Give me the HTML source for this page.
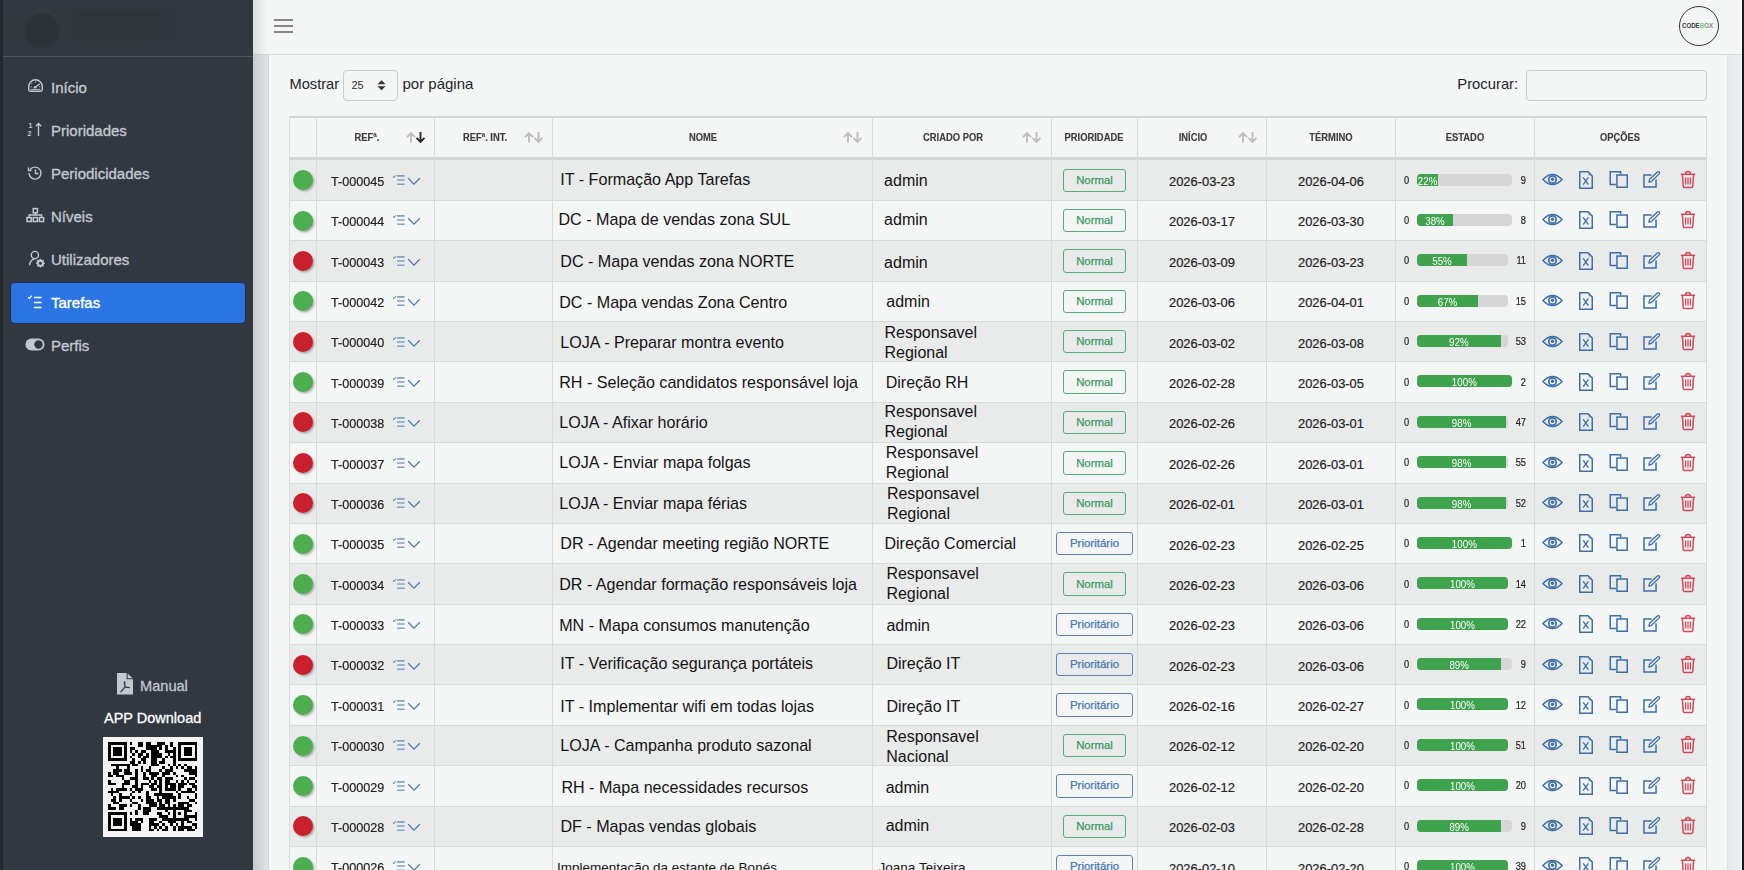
<!DOCTYPE html>
<html><head><meta charset="utf-8"><title>Tarefas</title>
<style>
html,body{margin:0;padding:0;width:1744px;height:870px;overflow:hidden;background:#f4f5f5}
body{position:relative;font-family:"Liberation Sans",sans-serif}
.b{position:absolute}
.t{position:absolute;white-space:nowrap;font-family:"Liberation Sans",sans-serif}
svg.b{overflow:visible}
</style></head><body>
<div class="b" style="left:0.00px;top:0.00px;width:1744.00px;height:870.00px;background:#f4f5f5"></div>
<div class="b" style="left:253.00px;top:54.00px;width:1491.00px;height:816.00px;background:#dee2e5"></div>
<div class="b" style="left:1727.00px;top:54.00px;width:15.00px;height:816.00px;background:linear-gradient(90deg,#dcdfe3 0px,#e9ecef 2px,#eceef1 100%)"></div>
<div class="b" style="left:268.00px;top:54.00px;width:1458.00px;height:816.00px;background:#f4f5f5;border-left:1px solid #d3d7da"></div>
<div class="b" style="left:1742.00px;top:0.00px;width:2.00px;height:870.00px;background:#1a1a1a"></div>
<div class="b" style="left:253.00px;top:0.00px;width:1489.00px;height:54.00px;background:#f4f5f5;border-bottom:1px solid #d6d8d9"></div>
<div class="b" style="left:253.00px;top:0.00px;width:14.00px;height:870.00px;background:linear-gradient(90deg,rgba(0,0,0,0.10),rgba(0,0,0,0))"></div>
<div class="b" style="left:0.00px;top:0.00px;width:253.00px;height:870.00px;background:#32383f"></div>
<div class="b" style="left:0.00px;top:0.00px;width:3.00px;height:870.00px;background:#24282c"></div>
<div class="b" style="left:3.00px;top:56.00px;width:250.00px;height:1.00px;background:#4b545c"></div>
<div class="b" style="left:24.00px;top:10.00px;width:36.00px;height:38.00px;background:#2d3237;border-radius:50%;filter:blur(1.5px);box-shadow:inset 0 2px 1px rgba(255,255,255,0.08)"></div>
<div class="b" style="left:70.00px;top:12.00px;width:105.00px;height:26.00px;background:#30363b;filter:blur(3px)"></div>
<div class="b" style="left:11.00px;top:283.00px;width:234.00px;height:40.00px;background:#2a74e4;border-radius:4px;box-shadow:0 0 0 1px rgba(10,40,90,.55)"></div>
<div class="t" style="left:51.00px;top:80.30px;font-size:15px;line-height:15px;font-weight:400;color:#c2c7d0;-webkit-text-stroke:0.35px #c2c7d0;">Início</div>
<div class="t" style="left:51.00px;top:123.30px;font-size:15px;line-height:15px;font-weight:400;color:#c2c7d0;-webkit-text-stroke:0.35px #c2c7d0;">Prioridades</div>
<div class="t" style="left:51.00px;top:166.30px;font-size:15px;line-height:15px;font-weight:400;color:#c2c7d0;-webkit-text-stroke:0.35px #c2c7d0;">Periodicidades</div>
<div class="t" style="left:51.00px;top:209.30px;font-size:15px;line-height:15px;font-weight:400;color:#c2c7d0;-webkit-text-stroke:0.35px #c2c7d0;">Níveis</div>
<div class="t" style="left:51.00px;top:252.30px;font-size:15px;line-height:15px;font-weight:400;color:#c2c7d0;-webkit-text-stroke:0.35px #c2c7d0;">Utilizadores</div>
<div class="t" style="left:51.00px;top:295.30px;font-size:15px;line-height:15px;font-weight:400;color:#ffffff;-webkit-text-stroke:0.35px #ffffff;">Tarefas</div>
<div class="t" style="left:51.00px;top:338.30px;font-size:15px;line-height:15px;font-weight:400;color:#c2c7d0;-webkit-text-stroke:0.35px #c2c7d0;">Perfis</div>
<svg class="b" style="left:27.50px;top:79.30px;" width="15" height="13" viewBox="0 0 15 13"><path d="M7.5 0.75A6.75 6.75 0 0 0 0.75 7.5V10.6Q0.75 12.25 2.4 12.25H12.6Q14.25 12.25 14.25 10.6V7.5A6.75 6.75 0 0 0 7.5 0.75Z" fill="none" stroke="#c2c7d0" stroke-width="1.4"/><path d="M7.3 8.2L11.3 5.2" stroke="#c2c7d0" stroke-width="1.4" stroke-linecap="round"/><circle cx="7.1" cy="8.3" r="1.3" fill="#c2c7d0"/><path d="M7.5 2.4v1.2M3.4 4.2l.8.8M2.8 7.8h1.1M11.1 7.8h1.1M2.6 10.4H12.4" fill="none" stroke="#c2c7d0" stroke-width="0.9"/></svg>
<svg class="b" style="left:27.00px;top:121.00px;" width="16" height="16" viewBox="0 0 16 16"><text x="1.5" y="7" font-family="Liberation Sans" font-size="7" font-weight="700" fill="#c2c7d0">1</text><text x="0.5" y="15" font-family="Liberation Sans" font-size="7" font-weight="700" fill="#c2c7d0">2</text><path d="M11.5 15V2.5M8.8 5.3l2.7-2.8 2.7 2.8" fill="none" stroke="#c2c7d0" stroke-width="1.3"/></svg>
<svg class="b" style="left:27.00px;top:165.00px;" width="16" height="15" viewBox="0 0 16 15"><path d="M3.2 4.5A6 6 0 1 1 2 8" fill="none" stroke="#c2c7d0" stroke-width="1.4"/><path d="M1.5 2.5v3h3" fill="none" stroke="#c2c7d0" stroke-width="1.4"/><path d="M8.5 4.5v4h3" fill="none" stroke="#c2c7d0" stroke-width="1.4"/></svg>
<svg class="b" style="left:26.00px;top:207.00px;" width="18" height="16" viewBox="0 0 18 16"><rect x="7.2" y="1.6" width="4.2" height="4.2" fill="none" stroke="#c2c7d0" stroke-width="1.5"/><path d="M9.3 5.8V8M3.1 10.2V8H15.5V10.2" fill="none" stroke="#c2c7d0" stroke-width="1.5"/><rect x="1" y="10.6" width="4.2" height="3.9" fill="none" stroke="#c2c7d0" stroke-width="1.5"/><rect x="7.2" y="10.6" width="4.2" height="3.9" fill="none" stroke="#c2c7d0" stroke-width="1.5"/><rect x="13.4" y="10.6" width="4.2" height="3.9" fill="none" stroke="#c2c7d0" stroke-width="1.5"/></svg>
<svg class="b" style="left:26.00px;top:249.00px;" width="20" height="20" viewBox="0 0 20 20"><circle cx="8.9" cy="6" r="3.6" fill="none" stroke="#c2c7d0" stroke-width="1.4"/><path d="M3.6 15.4Q4.6 11 8.2 9.9" fill="none" stroke="#c2c7d0" stroke-width="1.5" stroke-linecap="round"/><path d="M14.40,9.80 L15.59,11.34 L17.51,11.09 L17.26,13.01 L18.80,14.20 L17.26,15.39 L17.51,17.31 L15.59,17.06 L14.40,18.60 L13.21,17.06 L11.29,17.31 L11.54,15.39 L10.00,14.20 L11.54,13.01 L11.29,11.09 L13.21,11.34Z" fill="#c2c7d0" stroke="#c2c7d0" stroke-width="0.6" stroke-linejoin="round"/><circle cx="14.4" cy="14.2" r="1.5" fill="#32383f"/></svg>
<svg class="b" style="left:27.00px;top:294.00px;" width="16" height="15" viewBox="0 0 16 15"><path d="M1.2 3.2l1.2 1.1 2.3-2.6" fill="none" stroke="#fff" stroke-width="1.2"/><path d="M7 3.5h7.5M7 8.5h7.5M7 13.5h7.5" stroke="#fff" stroke-width="1.4"/></svg>
<svg class="b" style="left:25.00px;top:338.00px;" width="20" height="13" viewBox="0 0 20 13"><rect x="0.5" y="0.5" width="19" height="12" rx="6" fill="#c2c7d0"/><circle cx="13.5" cy="6.5" r="4.2" fill="#32383f"/></svg>
<svg class="b" style="left:117.00px;top:672.50px;" width="16" height="22" viewBox="0 0 16 22"><path d="M0 0H9.6V6.2H16V21.5H0Z" fill="#c4c8d0"/><path d="M10.6 0.4L15.6 5.3H10.6Z" fill="#c4c8d0"/><path d="M7.6 8.3Q6.7 8.6 7.2 10.5Q7.8 12.6 9.3 14.2Q10.9 15 12.6 14.6Q11 14 8.8 14.4Q6.2 15 4 17.8Q3 19 3.8 19.2Q4.8 19 6.3 16.6Q7.6 13.8 8 11Q8.3 9 7.6 8.3Z" fill="none" stroke="#32383f" stroke-width="0.95"/></svg>
<div class="t" style="left:140.00px;top:678.64px;font-size:14.6px;line-height:14.6px;font-weight:400;color:#c2c7d0;-webkit-text-stroke:0.3px #c2c7d0;">Manual</div>
<div class="t" style="left:104.00px;top:710.73px;font-size:14.5px;line-height:14.5px;font-weight:400;color:#ffffff;-webkit-text-stroke:0.3px #fff;">APP Download</div>
<div class="b" style="left:103.00px;top:737.00px;width:100.00px;height:100.00px;background:#f4f4f4"></div>
<svg class="b" style="left:108.30px;top:742.30px;shape-rendering:crispEdges" width="89.4" height="89.4" viewBox="0 0 33 33"><rect x="0" y="0" width="7" height="7" fill="#000"/><rect x="1" y="1" width="5" height="5" fill="#f4f4f4"/><rect x="2" y="2" width="3" height="3" fill="#000"/><rect x="26" y="0" width="7" height="7" fill="#000"/><rect x="27" y="1" width="5" height="5" fill="#f4f4f4"/><rect x="28" y="2" width="3" height="3" fill="#000"/><rect x="0" y="26" width="7" height="7" fill="#000"/><rect x="1" y="27" width="5" height="5" fill="#f4f4f4"/><rect x="2" y="28" width="3" height="3" fill="#000"/><rect x="24" y="24" width="5" height="5" fill="#000"/><rect x="25" y="25" width="3" height="3" fill="#f4f4f4"/><rect x="26" y="26" width="1" height="1" fill="#000"/><g fill="#000"><rect x="8" y="0" width="1" height="1"/><rect x="11" y="0" width="1" height="1"/><rect x="12" y="0" width="1" height="1"/><rect x="14" y="0" width="1" height="1"/><rect x="15" y="0" width="1" height="1"/><rect x="18" y="0" width="1" height="1"/><rect x="19" y="0" width="1" height="1"/><rect x="20" y="0" width="1" height="1"/><rect x="23" y="0" width="1" height="1"/><rect x="11" y="1" width="1" height="1"/><rect x="12" y="1" width="1" height="1"/><rect x="14" y="1" width="1" height="1"/><rect x="15" y="1" width="1" height="1"/><rect x="16" y="1" width="1" height="1"/><rect x="17" y="1" width="1" height="1"/><rect x="18" y="1" width="1" height="1"/><rect x="19" y="1" width="1" height="1"/><rect x="21" y="1" width="1" height="1"/><rect x="23" y="1" width="1" height="1"/><rect x="8" y="2" width="1" height="1"/><rect x="9" y="2" width="1" height="1"/><rect x="14" y="2" width="1" height="1"/><rect x="15" y="2" width="1" height="1"/><rect x="16" y="2" width="1" height="1"/><rect x="17" y="2" width="1" height="1"/><rect x="19" y="2" width="1" height="1"/><rect x="21" y="2" width="1" height="1"/><rect x="24" y="2" width="1" height="1"/><rect x="8" y="3" width="1" height="1"/><rect x="10" y="3" width="1" height="1"/><rect x="12" y="3" width="1" height="1"/><rect x="13" y="3" width="1" height="1"/><rect x="16" y="3" width="1" height="1"/><rect x="17" y="3" width="1" height="1"/><rect x="18" y="3" width="1" height="1"/><rect x="21" y="3" width="1" height="1"/><rect x="22" y="3" width="1" height="1"/><rect x="23" y="3" width="1" height="1"/><rect x="24" y="3" width="1" height="1"/><rect x="9" y="4" width="1" height="1"/><rect x="11" y="4" width="1" height="1"/><rect x="12" y="4" width="1" height="1"/><rect x="14" y="4" width="1" height="1"/><rect x="16" y="4" width="1" height="1"/><rect x="17" y="4" width="1" height="1"/><rect x="18" y="4" width="1" height="1"/><rect x="19" y="4" width="1" height="1"/><rect x="22" y="4" width="1" height="1"/><rect x="24" y="4" width="1" height="1"/><rect x="8" y="5" width="1" height="1"/><rect x="11" y="5" width="1" height="1"/><rect x="13" y="5" width="1" height="1"/><rect x="14" y="5" width="1" height="1"/><rect x="16" y="5" width="1" height="1"/><rect x="17" y="5" width="1" height="1"/><rect x="18" y="5" width="1" height="1"/><rect x="19" y="5" width="1" height="1"/><rect x="21" y="5" width="1" height="1"/><rect x="23" y="5" width="1" height="1"/><rect x="24" y="5" width="1" height="1"/><rect x="9" y="6" width="1" height="1"/><rect x="12" y="6" width="1" height="1"/><rect x="13" y="6" width="1" height="1"/><rect x="16" y="6" width="1" height="1"/><rect x="17" y="6" width="1" height="1"/><rect x="20" y="6" width="1" height="1"/><rect x="24" y="6" width="1" height="1"/><rect x="8" y="7" width="1" height="1"/><rect x="9" y="7" width="1" height="1"/><rect x="11" y="7" width="1" height="1"/><rect x="13" y="7" width="1" height="1"/><rect x="16" y="7" width="1" height="1"/><rect x="17" y="7" width="1" height="1"/><rect x="19" y="7" width="1" height="1"/><rect x="20" y="7" width="1" height="1"/><rect x="24" y="7" width="1" height="1"/><rect x="1" y="8" width="1" height="1"/><rect x="2" y="8" width="1" height="1"/><rect x="3" y="8" width="1" height="1"/><rect x="4" y="8" width="1" height="1"/><rect x="5" y="8" width="1" height="1"/><rect x="6" y="8" width="1" height="1"/><rect x="7" y="8" width="1" height="1"/><rect x="9" y="8" width="1" height="1"/><rect x="10" y="8" width="1" height="1"/><rect x="16" y="8" width="1" height="1"/><rect x="17" y="8" width="1" height="1"/><rect x="18" y="8" width="1" height="1"/><rect x="22" y="8" width="1" height="1"/><rect x="24" y="8" width="1" height="1"/><rect x="26" y="8" width="1" height="1"/><rect x="28" y="8" width="1" height="1"/><rect x="3" y="9" width="1" height="1"/><rect x="7" y="9" width="1" height="1"/><rect x="12" y="9" width="1" height="1"/><rect x="15" y="9" width="1" height="1"/><rect x="20" y="9" width="1" height="1"/><rect x="23" y="9" width="1" height="1"/><rect x="25" y="9" width="1" height="1"/><rect x="27" y="9" width="1" height="1"/><rect x="29" y="9" width="1" height="1"/><rect x="30" y="9" width="1" height="1"/><rect x="32" y="9" width="1" height="1"/><rect x="2" y="10" width="1" height="1"/><rect x="3" y="10" width="1" height="1"/><rect x="4" y="10" width="1" height="1"/><rect x="6" y="10" width="1" height="1"/><rect x="7" y="10" width="1" height="1"/><rect x="10" y="10" width="1" height="1"/><rect x="12" y="10" width="1" height="1"/><rect x="14" y="10" width="1" height="1"/><rect x="15" y="10" width="1" height="1"/><rect x="19" y="10" width="1" height="1"/><rect x="21" y="10" width="1" height="1"/><rect x="22" y="10" width="1" height="1"/><rect x="23" y="10" width="1" height="1"/><rect x="28" y="10" width="1" height="1"/><rect x="29" y="10" width="1" height="1"/><rect x="30" y="10" width="1" height="1"/><rect x="31" y="10" width="1" height="1"/><rect x="32" y="10" width="1" height="1"/><rect x="0" y="11" width="1" height="1"/><rect x="2" y="11" width="1" height="1"/><rect x="3" y="11" width="1" height="1"/><rect x="6" y="11" width="1" height="1"/><rect x="7" y="11" width="1" height="1"/><rect x="8" y="11" width="1" height="1"/><rect x="10" y="11" width="1" height="1"/><rect x="13" y="11" width="1" height="1"/><rect x="15" y="11" width="1" height="1"/><rect x="16" y="11" width="1" height="1"/><rect x="17" y="11" width="1" height="1"/><rect x="18" y="11" width="1" height="1"/><rect x="20" y="11" width="1" height="1"/><rect x="21" y="11" width="1" height="1"/><rect x="22" y="11" width="1" height="1"/><rect x="24" y="11" width="1" height="1"/><rect x="30" y="11" width="1" height="1"/><rect x="31" y="11" width="1" height="1"/><rect x="32" y="11" width="1" height="1"/><rect x="0" y="12" width="1" height="1"/><rect x="1" y="12" width="1" height="1"/><rect x="3" y="12" width="1" height="1"/><rect x="4" y="12" width="1" height="1"/><rect x="5" y="12" width="1" height="1"/><rect x="10" y="12" width="1" height="1"/><rect x="13" y="12" width="1" height="1"/><rect x="16" y="12" width="1" height="1"/><rect x="17" y="12" width="1" height="1"/><rect x="20" y="12" width="1" height="1"/><rect x="25" y="12" width="1" height="1"/><rect x="27" y="12" width="1" height="1"/><rect x="32" y="12" width="1" height="1"/><rect x="5" y="13" width="1" height="1"/><rect x="8" y="13" width="1" height="1"/><rect x="9" y="13" width="1" height="1"/><rect x="10" y="13" width="1" height="1"/><rect x="13" y="13" width="1" height="1"/><rect x="14" y="13" width="1" height="1"/><rect x="16" y="13" width="1" height="1"/><rect x="18" y="13" width="1" height="1"/><rect x="19" y="13" width="1" height="1"/><rect x="21" y="13" width="1" height="1"/><rect x="22" y="13" width="1" height="1"/><rect x="23" y="13" width="1" height="1"/><rect x="28" y="13" width="1" height="1"/><rect x="30" y="13" width="1" height="1"/><rect x="31" y="13" width="1" height="1"/><rect x="0" y="14" width="1" height="1"/><rect x="6" y="14" width="1" height="1"/><rect x="7" y="14" width="1" height="1"/><rect x="10" y="14" width="1" height="1"/><rect x="15" y="14" width="1" height="1"/><rect x="17" y="14" width="1" height="1"/><rect x="19" y="14" width="1" height="1"/><rect x="21" y="14" width="1" height="1"/><rect x="22" y="14" width="1" height="1"/><rect x="25" y="14" width="1" height="1"/><rect x="27" y="14" width="1" height="1"/><rect x="29" y="14" width="1" height="1"/><rect x="32" y="14" width="1" height="1"/><rect x="0" y="15" width="1" height="1"/><rect x="1" y="15" width="1" height="1"/><rect x="2" y="15" width="1" height="1"/><rect x="5" y="15" width="1" height="1"/><rect x="6" y="15" width="1" height="1"/><rect x="7" y="15" width="1" height="1"/><rect x="10" y="15" width="1" height="1"/><rect x="12" y="15" width="1" height="1"/><rect x="13" y="15" width="1" height="1"/><rect x="14" y="15" width="1" height="1"/><rect x="16" y="15" width="1" height="1"/><rect x="17" y="15" width="1" height="1"/><rect x="19" y="15" width="1" height="1"/><rect x="21" y="15" width="1" height="1"/><rect x="22" y="15" width="1" height="1"/><rect x="23" y="15" width="1" height="1"/><rect x="24" y="15" width="1" height="1"/><rect x="26" y="15" width="1" height="1"/><rect x="27" y="15" width="1" height="1"/><rect x="28" y="15" width="1" height="1"/><rect x="30" y="15" width="1" height="1"/><rect x="31" y="15" width="1" height="1"/><rect x="5" y="16" width="1" height="1"/><rect x="9" y="16" width="1" height="1"/><rect x="10" y="16" width="1" height="1"/><rect x="12" y="16" width="1" height="1"/><rect x="15" y="16" width="1" height="1"/><rect x="16" y="16" width="1" height="1"/><rect x="18" y="16" width="1" height="1"/><rect x="19" y="16" width="1" height="1"/><rect x="21" y="16" width="1" height="1"/><rect x="23" y="16" width="1" height="1"/><rect x="24" y="16" width="1" height="1"/><rect x="26" y="16" width="1" height="1"/><rect x="27" y="16" width="1" height="1"/><rect x="31" y="16" width="1" height="1"/><rect x="32" y="16" width="1" height="1"/><rect x="1" y="17" width="1" height="1"/><rect x="3" y="17" width="1" height="1"/><rect x="4" y="17" width="1" height="1"/><rect x="5" y="17" width="1" height="1"/><rect x="6" y="17" width="1" height="1"/><rect x="8" y="17" width="1" height="1"/><rect x="10" y="17" width="1" height="1"/><rect x="11" y="17" width="1" height="1"/><rect x="12" y="17" width="1" height="1"/><rect x="16" y="17" width="1" height="1"/><rect x="17" y="17" width="1" height="1"/><rect x="19" y="17" width="1" height="1"/><rect x="21" y="17" width="1" height="1"/><rect x="22" y="17" width="1" height="1"/><rect x="23" y="17" width="1" height="1"/><rect x="24" y="17" width="1" height="1"/><rect x="26" y="17" width="1" height="1"/><rect x="29" y="17" width="1" height="1"/><rect x="30" y="17" width="1" height="1"/><rect x="32" y="17" width="1" height="1"/><rect x="0" y="18" width="1" height="1"/><rect x="1" y="18" width="1" height="1"/><rect x="2" y="18" width="1" height="1"/><rect x="3" y="18" width="1" height="1"/><rect x="9" y="18" width="1" height="1"/><rect x="11" y="18" width="1" height="1"/><rect x="14" y="18" width="1" height="1"/><rect x="19" y="18" width="1" height="1"/><rect x="25" y="18" width="1" height="1"/><rect x="27" y="18" width="1" height="1"/><rect x="28" y="18" width="1" height="1"/><rect x="29" y="18" width="1" height="1"/><rect x="30" y="18" width="1" height="1"/><rect x="31" y="18" width="1" height="1"/><rect x="1" y="19" width="1" height="1"/><rect x="4" y="19" width="1" height="1"/><rect x="8" y="19" width="1" height="1"/><rect x="14" y="19" width="1" height="1"/><rect x="17" y="19" width="1" height="1"/><rect x="18" y="19" width="1" height="1"/><rect x="19" y="19" width="1" height="1"/><rect x="20" y="19" width="1" height="1"/><rect x="21" y="19" width="1" height="1"/><rect x="22" y="19" width="1" height="1"/><rect x="23" y="19" width="1" height="1"/><rect x="26" y="19" width="1" height="1"/><rect x="32" y="19" width="1" height="1"/><rect x="2" y="20" width="1" height="1"/><rect x="4" y="20" width="1" height="1"/><rect x="5" y="20" width="1" height="1"/><rect x="6" y="20" width="1" height="1"/><rect x="7" y="20" width="1" height="1"/><rect x="9" y="20" width="1" height="1"/><rect x="11" y="20" width="1" height="1"/><rect x="14" y="20" width="1" height="1"/><rect x="15" y="20" width="1" height="1"/><rect x="18" y="20" width="1" height="1"/><rect x="20" y="20" width="1" height="1"/><rect x="21" y="20" width="1" height="1"/><rect x="22" y="20" width="1" height="1"/><rect x="23" y="20" width="1" height="1"/><rect x="24" y="20" width="1" height="1"/><rect x="26" y="20" width="1" height="1"/><rect x="29" y="20" width="1" height="1"/><rect x="32" y="20" width="1" height="1"/><rect x="1" y="21" width="1" height="1"/><rect x="2" y="21" width="1" height="1"/><rect x="4" y="21" width="1" height="1"/><rect x="8" y="21" width="1" height="1"/><rect x="12" y="21" width="1" height="1"/><rect x="14" y="21" width="1" height="1"/><rect x="15" y="21" width="1" height="1"/><rect x="16" y="21" width="1" height="1"/><rect x="18" y="21" width="1" height="1"/><rect x="19" y="21" width="1" height="1"/><rect x="21" y="21" width="1" height="1"/><rect x="22" y="21" width="1" height="1"/><rect x="24" y="21" width="1" height="1"/><rect x="30" y="21" width="1" height="1"/><rect x="31" y="21" width="1" height="1"/><rect x="2" y="22" width="1" height="1"/><rect x="3" y="22" width="1" height="1"/><rect x="9" y="22" width="1" height="1"/><rect x="10" y="22" width="1" height="1"/><rect x="14" y="22" width="1" height="1"/><rect x="15" y="22" width="1" height="1"/><rect x="16" y="22" width="1" height="1"/><rect x="17" y="22" width="1" height="1"/><rect x="19" y="22" width="1" height="1"/><rect x="21" y="22" width="1" height="1"/><rect x="22" y="22" width="1" height="1"/><rect x="26" y="22" width="1" height="1"/><rect x="27" y="22" width="1" height="1"/><rect x="28" y="22" width="1" height="1"/><rect x="29" y="22" width="1" height="1"/><rect x="32" y="22" width="1" height="1"/><rect x="0" y="23" width="1" height="1"/><rect x="4" y="23" width="1" height="1"/><rect x="5" y="23" width="1" height="1"/><rect x="6" y="23" width="1" height="1"/><rect x="8" y="23" width="1" height="1"/><rect x="11" y="23" width="1" height="1"/><rect x="15" y="23" width="1" height="1"/><rect x="16" y="23" width="1" height="1"/><rect x="17" y="23" width="1" height="1"/><rect x="19" y="23" width="1" height="1"/><rect x="20" y="23" width="1" height="1"/><rect x="22" y="23" width="1" height="1"/><rect x="24" y="23" width="1" height="1"/><rect x="26" y="23" width="1" height="1"/><rect x="27" y="23" width="1" height="1"/><rect x="29" y="23" width="1" height="1"/><rect x="30" y="23" width="1" height="1"/><rect x="0" y="24" width="1" height="1"/><rect x="1" y="24" width="1" height="1"/><rect x="2" y="24" width="1" height="1"/><rect x="4" y="24" width="1" height="1"/><rect x="5" y="24" width="1" height="1"/><rect x="11" y="24" width="1" height="1"/><rect x="13" y="24" width="1" height="1"/><rect x="14" y="24" width="1" height="1"/><rect x="15" y="24" width="1" height="1"/><rect x="18" y="24" width="1" height="1"/><rect x="19" y="24" width="1" height="1"/><rect x="20" y="24" width="1" height="1"/><rect x="21" y="24" width="1" height="1"/><rect x="22" y="24" width="1" height="1"/><rect x="23" y="24" width="1" height="1"/><rect x="29" y="24" width="1" height="1"/><rect x="10" y="25" width="1" height="1"/><rect x="13" y="25" width="1" height="1"/><rect x="14" y="25" width="1" height="1"/><rect x="15" y="25" width="1" height="1"/><rect x="21" y="25" width="1" height="1"/><rect x="29" y="25" width="1" height="1"/><rect x="30" y="25" width="1" height="1"/><rect x="8" y="26" width="1" height="1"/><rect x="10" y="26" width="1" height="1"/><rect x="13" y="26" width="1" height="1"/><rect x="14" y="26" width="1" height="1"/><rect x="18" y="26" width="1" height="1"/><rect x="19" y="26" width="1" height="1"/><rect x="22" y="26" width="1" height="1"/><rect x="32" y="26" width="1" height="1"/><rect x="19" y="27" width="1" height="1"/><rect x="20" y="27" width="1" height="1"/><rect x="21" y="27" width="1" height="1"/><rect x="29" y="27" width="1" height="1"/><rect x="30" y="27" width="1" height="1"/><rect x="31" y="27" width="1" height="1"/><rect x="32" y="27" width="1" height="1"/><rect x="8" y="28" width="1" height="1"/><rect x="10" y="28" width="1" height="1"/><rect x="11" y="28" width="1" height="1"/><rect x="12" y="28" width="1" height="1"/><rect x="15" y="28" width="1" height="1"/><rect x="16" y="28" width="1" height="1"/><rect x="17" y="28" width="1" height="1"/><rect x="20" y="28" width="1" height="1"/><rect x="21" y="28" width="1" height="1"/><rect x="22" y="28" width="1" height="1"/><rect x="23" y="28" width="1" height="1"/><rect x="29" y="28" width="1" height="1"/><rect x="32" y="28" width="1" height="1"/><rect x="8" y="29" width="1" height="1"/><rect x="9" y="29" width="1" height="1"/><rect x="10" y="29" width="1" height="1"/><rect x="12" y="29" width="1" height="1"/><rect x="15" y="29" width="1" height="1"/><rect x="16" y="29" width="1" height="1"/><rect x="19" y="29" width="1" height="1"/><rect x="22" y="29" width="1" height="1"/><rect x="23" y="29" width="1" height="1"/><rect x="24" y="29" width="1" height="1"/><rect x="27" y="29" width="1" height="1"/><rect x="29" y="29" width="1" height="1"/><rect x="30" y="29" width="1" height="1"/><rect x="8" y="30" width="1" height="1"/><rect x="9" y="30" width="1" height="1"/><rect x="10" y="30" width="1" height="1"/><rect x="11" y="30" width="1" height="1"/><rect x="15" y="30" width="1" height="1"/><rect x="16" y="30" width="1" height="1"/><rect x="17" y="30" width="1" height="1"/><rect x="18" y="30" width="1" height="1"/><rect x="20" y="30" width="1" height="1"/><rect x="23" y="30" width="1" height="1"/><rect x="25" y="30" width="1" height="1"/><rect x="27" y="30" width="1" height="1"/><rect x="31" y="30" width="1" height="1"/><rect x="32" y="30" width="1" height="1"/><rect x="9" y="31" width="1" height="1"/><rect x="10" y="31" width="1" height="1"/><rect x="11" y="31" width="1" height="1"/><rect x="15" y="31" width="1" height="1"/><rect x="17" y="31" width="1" height="1"/><rect x="19" y="31" width="1" height="1"/><rect x="21" y="31" width="1" height="1"/><rect x="24" y="31" width="1" height="1"/><rect x="26" y="31" width="1" height="1"/><rect x="27" y="31" width="1" height="1"/><rect x="28" y="31" width="1" height="1"/><rect x="29" y="31" width="1" height="1"/><rect x="30" y="31" width="1" height="1"/><rect x="32" y="31" width="1" height="1"/><rect x="9" y="32" width="1" height="1"/><rect x="10" y="32" width="1" height="1"/><rect x="11" y="32" width="1" height="1"/><rect x="15" y="32" width="1" height="1"/><rect x="16" y="32" width="1" height="1"/><rect x="18" y="32" width="1" height="1"/><rect x="20" y="32" width="1" height="1"/><rect x="21" y="32" width="1" height="1"/><rect x="24" y="32" width="1" height="1"/><rect x="26" y="32" width="1" height="1"/><rect x="27" y="32" width="1" height="1"/><rect x="29" y="32" width="1" height="1"/><rect x="30" y="32" width="1" height="1"/><rect x="31" y="32" width="1" height="1"/></g></svg>
<div class="b" style="left:274.00px;top:19.20px;width:19.00px;height:1.80px;background:#858585"></div>
<div class="b" style="left:274.00px;top:25.20px;width:19.00px;height:1.80px;background:#858585"></div>
<div class="b" style="left:274.00px;top:31.10px;width:19.00px;height:1.80px;background:#858585"></div>
<div class="b" style="left:1679.00px;top:6.00px;width:38.00px;height:38.00px;border:1.5px solid #333;border-radius:50%;background:#f4f5f5"></div>
<svg class="b" style="left:1681.50px;top:22.00px;" width="32" height="7" viewBox="0 0 32 7"><text x="0" y="5.8" font-family="Liberation Sans" font-size="7" font-weight="700" fill="#333" textLength="31" lengthAdjust="spacingAndGlyphs">CODE<tspan fill="#6fd36f">B</tspan><tspan fill="#888">OX</tspan></text></svg>
<div class="t" style="left:289.50px;top:76.60px;font-size:14.65px;line-height:14.65px;font-weight:400;color:#212529;">Mostrar</div>
<div class="b" style="left:343.00px;top:70.00px;width:54.50px;height:30.50px;border:1px solid #c9ccd0;border-radius:4px;box-sizing:border-box"></div>
<div class="t" style="left:351.50px;top:79.69px;font-size:11px;line-height:11px;font-weight:400;color:#333;">25</div>
<svg class="b" style="left:377.00px;top:80.00px;" width="9" height="11" viewBox="0 0 9 11"><path d="M0.5 4.3L4.5 0.3 8.5 4.3z M0.5 6.2L4.5 10.2 8.5 6.2z" fill="#333"/></svg>
<div class="t" style="left:402.50px;top:76.30px;font-size:15px;line-height:15px;font-weight:400;color:#212529;">por página</div>
<div class="t" style="left:1457.30px;top:77.17px;font-size:14.8px;line-height:14.8px;font-weight:400;color:#212529;">Procurar:</div>
<div class="b" style="left:1526.00px;top:70.00px;width:181.00px;height:30.50px;border:1px solid #c9ccd0;border-radius:4px;box-sizing:border-box"></div>
<div class="b" style="left:289.00px;top:116.00px;width:1417.00px;height:43.00px;background:#f4f5f5"></div>
<div class="b" style="left:290.00px;top:159.00px;width:1416.00px;height:40.88px;background:#e9eaea"></div>
<div class="b" style="left:290.00px;top:240.26px;width:1416.00px;height:40.88px;background:#e9eaea"></div>
<div class="b" style="left:290.00px;top:321.02px;width:1416.00px;height:40.88px;background:#e9eaea"></div>
<div class="b" style="left:290.00px;top:401.78px;width:1416.00px;height:40.88px;background:#e9eaea"></div>
<div class="b" style="left:290.00px;top:482.54px;width:1416.00px;height:40.88px;background:#e9eaea"></div>
<div class="b" style="left:290.00px;top:563.30px;width:1416.00px;height:40.88px;background:#e9eaea"></div>
<div class="b" style="left:290.00px;top:644.06px;width:1416.00px;height:40.88px;background:#e9eaea"></div>
<div class="b" style="left:290.00px;top:724.82px;width:1416.00px;height:40.88px;background:#e9eaea"></div>
<div class="b" style="left:290.00px;top:805.58px;width:1416.00px;height:40.88px;background:#e9eaea"></div>
<div class="b" style="left:289.00px;top:115.50px;width:1418.00px;height:2.00px;background:#d3d6d9"></div>
<div class="b" style="left:289.00px;top:157.00px;width:1418.00px;height:2.50px;background:#d3d6d9"></div>
<div class="b" style="left:289.00px;top:199.88px;width:1418.00px;height:1.00px;background:#d8dadc"></div>
<div class="b" style="left:289.00px;top:240.26px;width:1418.00px;height:1.00px;background:#d8dadc"></div>
<div class="b" style="left:289.00px;top:280.64px;width:1418.00px;height:1.00px;background:#d8dadc"></div>
<div class="b" style="left:289.00px;top:321.02px;width:1418.00px;height:1.00px;background:#d8dadc"></div>
<div class="b" style="left:289.00px;top:361.40px;width:1418.00px;height:1.00px;background:#d8dadc"></div>
<div class="b" style="left:289.00px;top:401.78px;width:1418.00px;height:1.00px;background:#d8dadc"></div>
<div class="b" style="left:289.00px;top:442.16px;width:1418.00px;height:1.00px;background:#d8dadc"></div>
<div class="b" style="left:289.00px;top:482.54px;width:1418.00px;height:1.00px;background:#d8dadc"></div>
<div class="b" style="left:289.00px;top:522.92px;width:1418.00px;height:1.00px;background:#d8dadc"></div>
<div class="b" style="left:289.00px;top:563.30px;width:1418.00px;height:1.00px;background:#d8dadc"></div>
<div class="b" style="left:289.00px;top:603.68px;width:1418.00px;height:1.00px;background:#d8dadc"></div>
<div class="b" style="left:289.00px;top:644.06px;width:1418.00px;height:1.00px;background:#d8dadc"></div>
<div class="b" style="left:289.00px;top:684.44px;width:1418.00px;height:1.00px;background:#d8dadc"></div>
<div class="b" style="left:289.00px;top:724.82px;width:1418.00px;height:1.00px;background:#d8dadc"></div>
<div class="b" style="left:289.00px;top:765.20px;width:1418.00px;height:1.00px;background:#d8dadc"></div>
<div class="b" style="left:289.00px;top:805.58px;width:1418.00px;height:1.00px;background:#d8dadc"></div>
<div class="b" style="left:289.00px;top:845.96px;width:1418.00px;height:1.00px;background:#d8dadc"></div>
<div class="b" style="left:289.00px;top:886.34px;width:1418.00px;height:1.00px;background:#d8dadc"></div>
<div class="b" style="left:289.00px;top:116.00px;width:1.00px;height:754.00px;background:#d8dadc"></div>
<div class="b" style="left:316.00px;top:116.00px;width:1.00px;height:754.00px;background:#d8dadc"></div>
<div class="b" style="left:434.00px;top:116.00px;width:1.00px;height:754.00px;background:#d8dadc"></div>
<div class="b" style="left:552.00px;top:116.00px;width:1.00px;height:754.00px;background:#d8dadc"></div>
<div class="b" style="left:872.00px;top:116.00px;width:1.00px;height:754.00px;background:#d8dadc"></div>
<div class="b" style="left:1051.00px;top:116.00px;width:1.00px;height:754.00px;background:#d8dadc"></div>
<div class="b" style="left:1137.00px;top:116.00px;width:1.00px;height:754.00px;background:#d8dadc"></div>
<div class="b" style="left:1266.00px;top:116.00px;width:1.00px;height:754.00px;background:#d8dadc"></div>
<div class="b" style="left:1395.00px;top:116.00px;width:1.00px;height:754.00px;background:#d8dadc"></div>
<div class="b" style="left:1534.00px;top:116.00px;width:1.00px;height:754.00px;background:#d8dadc"></div>
<div class="b" style="left:1706.00px;top:116.00px;width:1.00px;height:754.00px;background:#d8dadc"></div>
<div class="t" style="left:166.50px;width:400px;text-align:center;top:132.33px;font-size:10.6px;line-height:10.6px;font-weight:700;color:#3d3d3d;transform:scaleX(0.885);transform-origin:200px 0;-webkit-text-stroke:0.15px #3d3d3d;">REFª.</div>
<div class="t" style="left:285.00px;width:400px;text-align:center;top:132.33px;font-size:10.6px;line-height:10.6px;font-weight:700;color:#3d3d3d;transform:scaleX(0.885);transform-origin:200px 0;-webkit-text-stroke:0.15px #3d3d3d;">REFª. INT.</div>
<div class="t" style="left:503.00px;width:400px;text-align:center;top:132.33px;font-size:10.6px;line-height:10.6px;font-weight:700;color:#3d3d3d;transform:scaleX(0.885);transform-origin:200px 0;-webkit-text-stroke:0.15px #3d3d3d;">NOME</div>
<div class="t" style="left:752.70px;width:400px;text-align:center;top:132.33px;font-size:10.6px;line-height:10.6px;font-weight:700;color:#3d3d3d;transform:scaleX(0.885);transform-origin:200px 0;-webkit-text-stroke:0.15px #3d3d3d;">CRIADO POR</div>
<div class="t" style="left:894.00px;width:400px;text-align:center;top:132.33px;font-size:10.6px;line-height:10.6px;font-weight:700;color:#3d3d3d;transform:scaleX(0.885);transform-origin:200px 0;-webkit-text-stroke:0.15px #3d3d3d;">PRIORIDADE</div>
<div class="t" style="left:993.30px;width:400px;text-align:center;top:132.33px;font-size:10.6px;line-height:10.6px;font-weight:700;color:#3d3d3d;transform:scaleX(0.885);transform-origin:200px 0;-webkit-text-stroke:0.15px #3d3d3d;">INÍCIO</div>
<div class="t" style="left:1131.40px;width:400px;text-align:center;top:132.33px;font-size:10.6px;line-height:10.6px;font-weight:700;color:#3d3d3d;transform:scaleX(0.885);transform-origin:200px 0;-webkit-text-stroke:0.15px #3d3d3d;">TÉRMINO</div>
<div class="t" style="left:1264.80px;width:400px;text-align:center;top:132.33px;font-size:10.6px;line-height:10.6px;font-weight:700;color:#3d3d3d;transform:scaleX(0.885);transform-origin:200px 0;-webkit-text-stroke:0.15px #3d3d3d;">ESTADO</div>
<div class="t" style="left:1419.80px;width:400px;text-align:center;top:132.33px;font-size:10.6px;line-height:10.6px;font-weight:700;color:#3d3d3d;transform:scaleX(0.885);transform-origin:200px 0;-webkit-text-stroke:0.15px #3d3d3d;">OPÇÕES</div>
<svg class="b" style="left:405.50px;top:132.00px;" width="20" height="11" viewBox="0 0 20 11"><path d="M5 10.5V1.2M1 5.2l4-4 4 4" fill="none" stroke="#bdbdbd" stroke-width="1.9"/><path d="M14.5 0V9.8M10.5 5.8l4 4 4-4" fill="none" stroke="#2a2a2a" stroke-width="1.9"/></svg>
<svg class="b" style="left:523.50px;top:132.00px;" width="20" height="11" viewBox="0 0 20 11"><path d="M5 10.5V1.2M1 5.2l4-4 4 4" fill="none" stroke="#bdbdbd" stroke-width="1.9"/><path d="M14.5 0V9.8M10.5 5.8l4 4 4-4" fill="none" stroke="#bdbdbd" stroke-width="1.9"/></svg>
<svg class="b" style="left:842.50px;top:132.00px;" width="20" height="11" viewBox="0 0 20 11"><path d="M5 10.5V1.2M1 5.2l4-4 4 4" fill="none" stroke="#bdbdbd" stroke-width="1.9"/><path d="M14.5 0V9.8M10.5 5.8l4 4 4-4" fill="none" stroke="#bdbdbd" stroke-width="1.9"/></svg>
<svg class="b" style="left:1021.50px;top:132.00px;" width="20" height="11" viewBox="0 0 20 11"><path d="M5 10.5V1.2M1 5.2l4-4 4 4" fill="none" stroke="#bdbdbd" stroke-width="1.9"/><path d="M14.5 0V9.8M10.5 5.8l4 4 4-4" fill="none" stroke="#bdbdbd" stroke-width="1.9"/></svg>
<svg class="b" style="left:1237.50px;top:132.00px;" width="20" height="11" viewBox="0 0 20 11"><path d="M5 10.5V1.2M1 5.2l4-4 4 4" fill="none" stroke="#bdbdbd" stroke-width="1.9"/><path d="M14.5 0V9.8M10.5 5.8l4 4 4-4" fill="none" stroke="#bdbdbd" stroke-width="1.9"/></svg>
<div class="b" style="left:293.00px;top:170.20px;width:20.00px;height:20.00px;background:#4cae4f;border-radius:50%;box-shadow:1.5px 1.5px 2px rgba(0,0,0,0.28)"></div>
<div class="t" style="left:331.00px;top:174.93px;font-size:13.2px;line-height:13.2px;font-weight:400;color:#222;transform:scaleX(0.955);transform-origin:0 0;-webkit-text-stroke:0.2px #222;">T-000045</div>
<svg class="b" style="left:392.00px;top:175.00px;" width="28" height="11" viewBox="0 0 28 11"><path d="M0.9 1.6l1 .9 2-2.2" fill="none" stroke="#3f5f85" stroke-width="1"/><path d="M5.1 0.9h7.5M5.1 5h7.5M5.1 9.2h7.5" stroke="#7ea2c9" stroke-width="1.6"/><path d="M16.2 3.3l5.8 5.8 5.8-5.8" fill="none" stroke="#4577b3" stroke-width="1.25"/></svg>
<div class="t" style="left:560.30px;top:171.17px;font-size:16.1px;line-height:16.1px;font-weight:400;color:#141414;">IT - Formação App Tarefas</div>
<div class="t" style="left:884.10px;top:172.66px;font-size:16px;line-height:16px;font-weight:400;color:#141414;">admin</div>
<div class="b" style="left:1063.00px;top:168.50px;width:63.00px;height:23.40px;border:1px solid #55ab7a;border-radius:3px;box-sizing:border-box"></div>
<div class="t" style="left:894.50px;width:400px;text-align:center;top:174.85px;font-size:11.4px;line-height:11.4px;font-weight:400;color:#3a9862;-webkit-text-stroke:0.25px #3a9862;">Normal</div>
<div class="t" style="left:1002.00px;width:400px;text-align:center;top:176.08px;font-size:12.9px;line-height:12.9px;font-weight:400;color:#222;-webkit-text-stroke:0.2px #222;">2026-03-23</div>
<div class="t" style="left:1131.00px;width:400px;text-align:center;top:176.08px;font-size:12.9px;line-height:12.9px;font-weight:400;color:#222;-webkit-text-stroke:0.2px #222;">2026-04-06</div>
<div class="t" style="left:1403.80px;top:174.73px;font-size:11.3px;line-height:11.3px;font-weight:400;color:#222;transform:scaleX(0.82);transform-origin:0 0;-webkit-text-stroke:0.2px #222;">0</div>
<div class="b" style="left:1417.00px;top:173.50px;width:94.70px;height:12.00px;background:#d6d6d6;border-radius:4px"></div>
<div class="b" style="left:1417px;top:173.50px;width:20.83px;height:12px;background:#3fa24d;border-radius:4px 0 0 4px;overflow:visible"><div style="position:absolute;left:0;top:0;width:20.83px;text-align:center;font-size:10.6px;line-height:14px;color:#fff;transform:scaleX(0.92)">22%</div></div>
<div class="t" style="left:1125.80px;width:400px;text-align:right;top:174.73px;font-size:11.3px;line-height:11.3px;font-weight:400;color:#222;transform:scaleX(0.82);transform-origin:400px 0;-webkit-text-stroke:0.2px #222;">9</div>
<svg class="b" style="left:1542.00px;top:173.00px;" width="21" height="13" viewBox="0 0 21 13"><path d="M0.9 6.5Q10.5 -3.6 20.1 6.5Q10.5 16.6 0.9 6.5Z" fill="none" stroke="#3d6fa6" stroke-width="1.5" stroke-linejoin="round"/><circle cx="10.5" cy="6.5" r="3.7" fill="none" stroke="#3d6fa6" stroke-width="1.7"/><circle cx="10.5" cy="6.3" r="1.7" fill="#3d6fa6"/></svg>
<svg class="b" style="left:1579.00px;top:171.00px;" width="14" height="18" viewBox="0 0 14 18"><path d="M0.75 0.75H9L13.25 5V17.25H0.75Z" fill="none" stroke="#3d6fa6" stroke-width="1.5" stroke-linejoin="miter"/><path d="M9.4 1.3L12.7 4.6H9.4Z" fill="#3d6fa6" fill-opacity="0.45"/><path d="M4.2 6.4L9.4 13.7M9.4 6.4L4.2 13.7" stroke="#3d6fa6" stroke-width="1.35"/></svg>
<svg class="b" style="left:1609.00px;top:171.00px;" width="19" height="18" viewBox="0 0 19 18"><path d="M11.6 3.3V0.75H1.25V13.6H7" fill="none" stroke="#3d6fa6" stroke-width="1.5"/><rect x="7.95" y="4.05" width="10.3" height="12.2" fill="none" stroke="#3d6fa6" stroke-width="1.5"/></svg>
<svg class="b" style="left:1642.00px;top:171.00px;" width="19" height="18" viewBox="0 0 19 18"><path d="M9.6 4.05H1.95V15.95H14.05V8.6" fill="none" stroke="#3d6fa6" stroke-width="1.5"/><path d="M6.9 11.2L7.6 8.2L15.4 0.95Q16.5 0.2 17.3 1.05Q18.1 1.9 17.2 2.9L9.6 10.3Z" fill="none" stroke="#3d6fa6" stroke-width="1.3" stroke-linejoin="round"/></svg>
<svg class="b" style="left:1680.00px;top:170.00px;" width="16" height="19" viewBox="0 0 16 19"><path d="M0.9 4.3H15.1" stroke="#cf4a5b" stroke-width="1.5"/><path d="M5.6 4.1Q5.6 1.6 8 1.6Q10.4 1.6 10.4 4.1" fill="none" stroke="#cf4a5b" stroke-width="1.5"/><path d="M2.4 4.5L3.2 16.3Q3.3 17.5 4.5 17.5H11.5Q12.7 17.5 12.8 16.3L13.6 4.5" fill="none" stroke="#cf4a5b" stroke-width="1.5"/><path d="M5.6 7.4v7.2M8 7.4v7.2M10.4 7.4v7.2" stroke="#cf4a5b" stroke-width="1.3"/></svg>
<div class="b" style="left:293.00px;top:210.58px;width:20.00px;height:20.00px;background:#4cae4f;border-radius:50%;box-shadow:1.5px 1.5px 2px rgba(0,0,0,0.28)"></div>
<div class="t" style="left:331.00px;top:215.31px;font-size:13.2px;line-height:13.2px;font-weight:400;color:#222;transform:scaleX(0.955);transform-origin:0 0;-webkit-text-stroke:0.2px #222;">T-000044</div>
<svg class="b" style="left:392.00px;top:215.38px;" width="28" height="11" viewBox="0 0 28 11"><path d="M0.9 1.6l1 .9 2-2.2" fill="none" stroke="#3f5f85" stroke-width="1"/><path d="M5.1 0.9h7.5M5.1 5h7.5M5.1 9.2h7.5" stroke="#7ea2c9" stroke-width="1.6"/><path d="M16.2 3.3l5.8 5.8 5.8-5.8" fill="none" stroke="#4577b3" stroke-width="1.25"/></svg>
<div class="t" style="left:558.50px;top:211.47px;font-size:16.1px;line-height:16.1px;font-weight:400;color:#141414;">DC - Mapa de vendas zona SUL</div>
<div class="t" style="left:884.10px;top:211.66px;font-size:16px;line-height:16px;font-weight:400;color:#141414;">admin</div>
<div class="b" style="left:1063.00px;top:208.88px;width:63.00px;height:23.40px;border:1px solid #55ab7a;border-radius:3px;box-sizing:border-box"></div>
<div class="t" style="left:894.50px;width:400px;text-align:center;top:215.23px;font-size:11.4px;line-height:11.4px;font-weight:400;color:#3a9862;-webkit-text-stroke:0.25px #3a9862;">Normal</div>
<div class="t" style="left:1002.00px;width:400px;text-align:center;top:216.46px;font-size:12.9px;line-height:12.9px;font-weight:400;color:#222;-webkit-text-stroke:0.2px #222;">2026-03-17</div>
<div class="t" style="left:1131.00px;width:400px;text-align:center;top:216.46px;font-size:12.9px;line-height:12.9px;font-weight:400;color:#222;-webkit-text-stroke:0.2px #222;">2026-03-30</div>
<div class="t" style="left:1403.80px;top:215.11px;font-size:11.3px;line-height:11.3px;font-weight:400;color:#222;transform:scaleX(0.82);transform-origin:0 0;-webkit-text-stroke:0.2px #222;">0</div>
<div class="b" style="left:1417.00px;top:213.88px;width:94.70px;height:12.00px;background:#d6d6d6;border-radius:4px"></div>
<div class="b" style="left:1417px;top:213.88px;width:35.99px;height:12px;background:#3fa24d;border-radius:4px 0 0 4px;overflow:visible"><div style="position:absolute;left:0;top:0;width:35.99px;text-align:center;font-size:10.6px;line-height:14px;color:#fff;transform:scaleX(0.92)">38%</div></div>
<div class="t" style="left:1125.80px;width:400px;text-align:right;top:215.11px;font-size:11.3px;line-height:11.3px;font-weight:400;color:#222;transform:scaleX(0.82);transform-origin:400px 0;-webkit-text-stroke:0.2px #222;">8</div>
<svg class="b" style="left:1542.00px;top:213.38px;" width="21" height="13" viewBox="0 0 21 13"><path d="M0.9 6.5Q10.5 -3.6 20.1 6.5Q10.5 16.6 0.9 6.5Z" fill="none" stroke="#3d6fa6" stroke-width="1.5" stroke-linejoin="round"/><circle cx="10.5" cy="6.5" r="3.7" fill="none" stroke="#3d6fa6" stroke-width="1.7"/><circle cx="10.5" cy="6.3" r="1.7" fill="#3d6fa6"/></svg>
<svg class="b" style="left:1579.00px;top:211.38px;" width="14" height="18" viewBox="0 0 14 18"><path d="M0.75 0.75H9L13.25 5V17.25H0.75Z" fill="none" stroke="#3d6fa6" stroke-width="1.5" stroke-linejoin="miter"/><path d="M9.4 1.3L12.7 4.6H9.4Z" fill="#3d6fa6" fill-opacity="0.45"/><path d="M4.2 6.4L9.4 13.7M9.4 6.4L4.2 13.7" stroke="#3d6fa6" stroke-width="1.35"/></svg>
<svg class="b" style="left:1609.00px;top:211.38px;" width="19" height="18" viewBox="0 0 19 18"><path d="M11.6 3.3V0.75H1.25V13.6H7" fill="none" stroke="#3d6fa6" stroke-width="1.5"/><rect x="7.95" y="4.05" width="10.3" height="12.2" fill="none" stroke="#3d6fa6" stroke-width="1.5"/></svg>
<svg class="b" style="left:1642.00px;top:211.38px;" width="19" height="18" viewBox="0 0 19 18"><path d="M9.6 4.05H1.95V15.95H14.05V8.6" fill="none" stroke="#3d6fa6" stroke-width="1.5"/><path d="M6.9 11.2L7.6 8.2L15.4 0.95Q16.5 0.2 17.3 1.05Q18.1 1.9 17.2 2.9L9.6 10.3Z" fill="none" stroke="#3d6fa6" stroke-width="1.3" stroke-linejoin="round"/></svg>
<svg class="b" style="left:1680.00px;top:210.38px;" width="16" height="19" viewBox="0 0 16 19"><path d="M0.9 4.3H15.1" stroke="#cf4a5b" stroke-width="1.5"/><path d="M5.6 4.1Q5.6 1.6 8 1.6Q10.4 1.6 10.4 4.1" fill="none" stroke="#cf4a5b" stroke-width="1.5"/><path d="M2.4 4.5L3.2 16.3Q3.3 17.5 4.5 17.5H11.5Q12.7 17.5 12.8 16.3L13.6 4.5" fill="none" stroke="#cf4a5b" stroke-width="1.5"/><path d="M5.6 7.4v7.2M8 7.4v7.2M10.4 7.4v7.2" stroke="#cf4a5b" stroke-width="1.3"/></svg>
<div class="b" style="left:293.00px;top:250.96px;width:20.00px;height:20.00px;background:#c9202e;border-radius:50%;box-shadow:1.5px 1.5px 2px rgba(0,0,0,0.28)"></div>
<div class="t" style="left:331.00px;top:255.69px;font-size:13.2px;line-height:13.2px;font-weight:400;color:#222;transform:scaleX(0.955);transform-origin:0 0;-webkit-text-stroke:0.2px #222;">T-000043</div>
<svg class="b" style="left:392.00px;top:255.76px;" width="28" height="11" viewBox="0 0 28 11"><path d="M0.9 1.6l1 .9 2-2.2" fill="none" stroke="#3f5f85" stroke-width="1"/><path d="M5.1 0.9h7.5M5.1 5h7.5M5.1 9.2h7.5" stroke="#7ea2c9" stroke-width="1.6"/><path d="M16.2 3.3l5.8 5.8 5.8-5.8" fill="none" stroke="#4577b3" stroke-width="1.25"/></svg>
<div class="t" style="left:560.30px;top:253.37px;font-size:16.1px;line-height:16.1px;font-weight:400;color:#141414;">DC - Mapa vendas zona NORTE</div>
<div class="t" style="left:884.10px;top:254.56px;font-size:16px;line-height:16px;font-weight:400;color:#141414;">admin</div>
<div class="b" style="left:1063.00px;top:249.26px;width:63.00px;height:23.40px;border:1px solid #55ab7a;border-radius:3px;box-sizing:border-box"></div>
<div class="t" style="left:894.50px;width:400px;text-align:center;top:255.61px;font-size:11.4px;line-height:11.4px;font-weight:400;color:#3a9862;-webkit-text-stroke:0.25px #3a9862;">Normal</div>
<div class="t" style="left:1002.00px;width:400px;text-align:center;top:256.84px;font-size:12.9px;line-height:12.9px;font-weight:400;color:#222;-webkit-text-stroke:0.2px #222;">2026-03-09</div>
<div class="t" style="left:1131.00px;width:400px;text-align:center;top:256.84px;font-size:12.9px;line-height:12.9px;font-weight:400;color:#222;-webkit-text-stroke:0.2px #222;">2026-03-23</div>
<div class="t" style="left:1403.80px;top:255.49px;font-size:11.3px;line-height:11.3px;font-weight:400;color:#222;transform:scaleX(0.82);transform-origin:0 0;-webkit-text-stroke:0.2px #222;">0</div>
<div class="b" style="left:1417.00px;top:254.26px;width:91.00px;height:12.00px;background:#d6d6d6;border-radius:4px"></div>
<div class="b" style="left:1417px;top:254.26px;width:50.05px;height:12px;background:#3fa24d;border-radius:4px 0 0 4px;overflow:visible"><div style="position:absolute;left:0;top:0;width:50.05px;text-align:center;font-size:10.6px;line-height:14px;color:#fff;transform:scaleX(0.92)">55%</div></div>
<div class="t" style="left:1125.80px;width:400px;text-align:right;top:255.49px;font-size:11.3px;line-height:11.3px;font-weight:400;color:#222;transform:scaleX(0.82);transform-origin:400px 0;-webkit-text-stroke:0.2px #222;">11</div>
<svg class="b" style="left:1542.00px;top:253.76px;" width="21" height="13" viewBox="0 0 21 13"><path d="M0.9 6.5Q10.5 -3.6 20.1 6.5Q10.5 16.6 0.9 6.5Z" fill="none" stroke="#3d6fa6" stroke-width="1.5" stroke-linejoin="round"/><circle cx="10.5" cy="6.5" r="3.7" fill="none" stroke="#3d6fa6" stroke-width="1.7"/><circle cx="10.5" cy="6.3" r="1.7" fill="#3d6fa6"/></svg>
<svg class="b" style="left:1579.00px;top:251.76px;" width="14" height="18" viewBox="0 0 14 18"><path d="M0.75 0.75H9L13.25 5V17.25H0.75Z" fill="none" stroke="#3d6fa6" stroke-width="1.5" stroke-linejoin="miter"/><path d="M9.4 1.3L12.7 4.6H9.4Z" fill="#3d6fa6" fill-opacity="0.45"/><path d="M4.2 6.4L9.4 13.7M9.4 6.4L4.2 13.7" stroke="#3d6fa6" stroke-width="1.35"/></svg>
<svg class="b" style="left:1609.00px;top:251.76px;" width="19" height="18" viewBox="0 0 19 18"><path d="M11.6 3.3V0.75H1.25V13.6H7" fill="none" stroke="#3d6fa6" stroke-width="1.5"/><rect x="7.95" y="4.05" width="10.3" height="12.2" fill="none" stroke="#3d6fa6" stroke-width="1.5"/></svg>
<svg class="b" style="left:1642.00px;top:251.76px;" width="19" height="18" viewBox="0 0 19 18"><path d="M9.6 4.05H1.95V15.95H14.05V8.6" fill="none" stroke="#3d6fa6" stroke-width="1.5"/><path d="M6.9 11.2L7.6 8.2L15.4 0.95Q16.5 0.2 17.3 1.05Q18.1 1.9 17.2 2.9L9.6 10.3Z" fill="none" stroke="#3d6fa6" stroke-width="1.3" stroke-linejoin="round"/></svg>
<svg class="b" style="left:1680.00px;top:250.76px;" width="16" height="19" viewBox="0 0 16 19"><path d="M0.9 4.3H15.1" stroke="#cf4a5b" stroke-width="1.5"/><path d="M5.6 4.1Q5.6 1.6 8 1.6Q10.4 1.6 10.4 4.1" fill="none" stroke="#cf4a5b" stroke-width="1.5"/><path d="M2.4 4.5L3.2 16.3Q3.3 17.5 4.5 17.5H11.5Q12.7 17.5 12.8 16.3L13.6 4.5" fill="none" stroke="#cf4a5b" stroke-width="1.5"/><path d="M5.6 7.4v7.2M8 7.4v7.2M10.4 7.4v7.2" stroke="#cf4a5b" stroke-width="1.3"/></svg>
<div class="b" style="left:293.00px;top:291.34px;width:20.00px;height:20.00px;background:#4cae4f;border-radius:50%;box-shadow:1.5px 1.5px 2px rgba(0,0,0,0.28)"></div>
<div class="t" style="left:331.00px;top:296.07px;font-size:13.2px;line-height:13.2px;font-weight:400;color:#222;transform:scaleX(0.955);transform-origin:0 0;-webkit-text-stroke:0.2px #222;">T-000042</div>
<svg class="b" style="left:392.00px;top:296.14px;" width="28" height="11" viewBox="0 0 28 11"><path d="M0.9 1.6l1 .9 2-2.2" fill="none" stroke="#3f5f85" stroke-width="1"/><path d="M5.1 0.9h7.5M5.1 5h7.5M5.1 9.2h7.5" stroke="#7ea2c9" stroke-width="1.6"/><path d="M16.2 3.3l5.8 5.8 5.8-5.8" fill="none" stroke="#4577b3" stroke-width="1.25"/></svg>
<div class="t" style="left:559.20px;top:293.57px;font-size:16.1px;line-height:16.1px;font-weight:400;color:#141414;">DC - Mapa vendas Zona Centro</div>
<div class="t" style="left:886.30px;top:293.66px;font-size:16px;line-height:16px;font-weight:400;color:#141414;">admin</div>
<div class="b" style="left:1063.00px;top:289.64px;width:63.00px;height:23.40px;border:1px solid #55ab7a;border-radius:3px;box-sizing:border-box"></div>
<div class="t" style="left:894.50px;width:400px;text-align:center;top:295.99px;font-size:11.4px;line-height:11.4px;font-weight:400;color:#3a9862;-webkit-text-stroke:0.25px #3a9862;">Normal</div>
<div class="t" style="left:1002.00px;width:400px;text-align:center;top:297.22px;font-size:12.9px;line-height:12.9px;font-weight:400;color:#222;-webkit-text-stroke:0.2px #222;">2026-03-06</div>
<div class="t" style="left:1131.00px;width:400px;text-align:center;top:297.22px;font-size:12.9px;line-height:12.9px;font-weight:400;color:#222;-webkit-text-stroke:0.2px #222;">2026-04-01</div>
<div class="t" style="left:1403.80px;top:295.87px;font-size:11.3px;line-height:11.3px;font-weight:400;color:#222;transform:scaleX(0.82);transform-origin:0 0;-webkit-text-stroke:0.2px #222;">0</div>
<div class="b" style="left:1417.00px;top:294.64px;width:91.00px;height:12.00px;background:#d6d6d6;border-radius:4px"></div>
<div class="b" style="left:1417px;top:294.64px;width:60.97px;height:12px;background:#3fa24d;border-radius:4px 0 0 4px;overflow:visible"><div style="position:absolute;left:0;top:0;width:60.97px;text-align:center;font-size:10.6px;line-height:14px;color:#fff;transform:scaleX(0.92)">67%</div></div>
<div class="t" style="left:1125.80px;width:400px;text-align:right;top:295.87px;font-size:11.3px;line-height:11.3px;font-weight:400;color:#222;transform:scaleX(0.82);transform-origin:400px 0;-webkit-text-stroke:0.2px #222;">15</div>
<svg class="b" style="left:1542.00px;top:294.14px;" width="21" height="13" viewBox="0 0 21 13"><path d="M0.9 6.5Q10.5 -3.6 20.1 6.5Q10.5 16.6 0.9 6.5Z" fill="none" stroke="#3d6fa6" stroke-width="1.5" stroke-linejoin="round"/><circle cx="10.5" cy="6.5" r="3.7" fill="none" stroke="#3d6fa6" stroke-width="1.7"/><circle cx="10.5" cy="6.3" r="1.7" fill="#3d6fa6"/></svg>
<svg class="b" style="left:1579.00px;top:292.14px;" width="14" height="18" viewBox="0 0 14 18"><path d="M0.75 0.75H9L13.25 5V17.25H0.75Z" fill="none" stroke="#3d6fa6" stroke-width="1.5" stroke-linejoin="miter"/><path d="M9.4 1.3L12.7 4.6H9.4Z" fill="#3d6fa6" fill-opacity="0.45"/><path d="M4.2 6.4L9.4 13.7M9.4 6.4L4.2 13.7" stroke="#3d6fa6" stroke-width="1.35"/></svg>
<svg class="b" style="left:1609.00px;top:292.14px;" width="19" height="18" viewBox="0 0 19 18"><path d="M11.6 3.3V0.75H1.25V13.6H7" fill="none" stroke="#3d6fa6" stroke-width="1.5"/><rect x="7.95" y="4.05" width="10.3" height="12.2" fill="none" stroke="#3d6fa6" stroke-width="1.5"/></svg>
<svg class="b" style="left:1642.00px;top:292.14px;" width="19" height="18" viewBox="0 0 19 18"><path d="M9.6 4.05H1.95V15.95H14.05V8.6" fill="none" stroke="#3d6fa6" stroke-width="1.5"/><path d="M6.9 11.2L7.6 8.2L15.4 0.95Q16.5 0.2 17.3 1.05Q18.1 1.9 17.2 2.9L9.6 10.3Z" fill="none" stroke="#3d6fa6" stroke-width="1.3" stroke-linejoin="round"/></svg>
<svg class="b" style="left:1680.00px;top:291.14px;" width="16" height="19" viewBox="0 0 16 19"><path d="M0.9 4.3H15.1" stroke="#cf4a5b" stroke-width="1.5"/><path d="M5.6 4.1Q5.6 1.6 8 1.6Q10.4 1.6 10.4 4.1" fill="none" stroke="#cf4a5b" stroke-width="1.5"/><path d="M2.4 4.5L3.2 16.3Q3.3 17.5 4.5 17.5H11.5Q12.7 17.5 12.8 16.3L13.6 4.5" fill="none" stroke="#cf4a5b" stroke-width="1.5"/><path d="M5.6 7.4v7.2M8 7.4v7.2M10.4 7.4v7.2" stroke="#cf4a5b" stroke-width="1.3"/></svg>
<div class="b" style="left:293.00px;top:331.72px;width:20.00px;height:20.00px;background:#c9202e;border-radius:50%;box-shadow:1.5px 1.5px 2px rgba(0,0,0,0.28)"></div>
<div class="t" style="left:331.00px;top:336.45px;font-size:13.2px;line-height:13.2px;font-weight:400;color:#222;transform:scaleX(0.955);transform-origin:0 0;-webkit-text-stroke:0.2px #222;">T-000040</div>
<svg class="b" style="left:392.00px;top:336.52px;" width="28" height="11" viewBox="0 0 28 11"><path d="M0.9 1.6l1 .9 2-2.2" fill="none" stroke="#3f5f85" stroke-width="1"/><path d="M5.1 0.9h7.5M5.1 5h7.5M5.1 9.2h7.5" stroke="#7ea2c9" stroke-width="1.6"/><path d="M16.2 3.3l5.8 5.8 5.8-5.8" fill="none" stroke="#4577b3" stroke-width="1.25"/></svg>
<div class="t" style="left:560.30px;top:333.77px;font-size:16.1px;line-height:16.1px;font-weight:400;color:#141414;">LOJA - Preparar montra evento</div>
<div class="t" style="left:884.50px;top:325.26px;font-size:16px;line-height:16px;font-weight:400;color:#141414;">Responsavel</div>
<div class="t" style="left:884.50px;top:345.06px;font-size:16px;line-height:16px;font-weight:400;color:#141414;">Regional</div>
<div class="b" style="left:1063.00px;top:330.02px;width:63.00px;height:23.40px;border:1px solid #55ab7a;border-radius:3px;box-sizing:border-box"></div>
<div class="t" style="left:894.50px;width:400px;text-align:center;top:336.37px;font-size:11.4px;line-height:11.4px;font-weight:400;color:#3a9862;-webkit-text-stroke:0.25px #3a9862;">Normal</div>
<div class="t" style="left:1002.00px;width:400px;text-align:center;top:337.60px;font-size:12.9px;line-height:12.9px;font-weight:400;color:#222;-webkit-text-stroke:0.2px #222;">2026-03-02</div>
<div class="t" style="left:1131.00px;width:400px;text-align:center;top:337.60px;font-size:12.9px;line-height:12.9px;font-weight:400;color:#222;-webkit-text-stroke:0.2px #222;">2026-03-08</div>
<div class="t" style="left:1403.80px;top:336.25px;font-size:11.3px;line-height:11.3px;font-weight:400;color:#222;transform:scaleX(0.82);transform-origin:0 0;-webkit-text-stroke:0.2px #222;">0</div>
<div class="b" style="left:1417.00px;top:335.02px;width:91.00px;height:12.00px;background:#d6d6d6;border-radius:4px"></div>
<div class="b" style="left:1417px;top:335.02px;width:83.72px;height:12px;background:#3fa24d;border-radius:4px 0 0 4px;overflow:visible"><div style="position:absolute;left:0;top:0;width:83.72px;text-align:center;font-size:10.6px;line-height:14px;color:#fff;transform:scaleX(0.92)">92%</div></div>
<div class="t" style="left:1125.80px;width:400px;text-align:right;top:336.25px;font-size:11.3px;line-height:11.3px;font-weight:400;color:#222;transform:scaleX(0.82);transform-origin:400px 0;-webkit-text-stroke:0.2px #222;">53</div>
<svg class="b" style="left:1542.00px;top:334.52px;" width="21" height="13" viewBox="0 0 21 13"><path d="M0.9 6.5Q10.5 -3.6 20.1 6.5Q10.5 16.6 0.9 6.5Z" fill="none" stroke="#3d6fa6" stroke-width="1.5" stroke-linejoin="round"/><circle cx="10.5" cy="6.5" r="3.7" fill="none" stroke="#3d6fa6" stroke-width="1.7"/><circle cx="10.5" cy="6.3" r="1.7" fill="#3d6fa6"/></svg>
<svg class="b" style="left:1579.00px;top:332.52px;" width="14" height="18" viewBox="0 0 14 18"><path d="M0.75 0.75H9L13.25 5V17.25H0.75Z" fill="none" stroke="#3d6fa6" stroke-width="1.5" stroke-linejoin="miter"/><path d="M9.4 1.3L12.7 4.6H9.4Z" fill="#3d6fa6" fill-opacity="0.45"/><path d="M4.2 6.4L9.4 13.7M9.4 6.4L4.2 13.7" stroke="#3d6fa6" stroke-width="1.35"/></svg>
<svg class="b" style="left:1609.00px;top:332.52px;" width="19" height="18" viewBox="0 0 19 18"><path d="M11.6 3.3V0.75H1.25V13.6H7" fill="none" stroke="#3d6fa6" stroke-width="1.5"/><rect x="7.95" y="4.05" width="10.3" height="12.2" fill="none" stroke="#3d6fa6" stroke-width="1.5"/></svg>
<svg class="b" style="left:1642.00px;top:332.52px;" width="19" height="18" viewBox="0 0 19 18"><path d="M9.6 4.05H1.95V15.95H14.05V8.6" fill="none" stroke="#3d6fa6" stroke-width="1.5"/><path d="M6.9 11.2L7.6 8.2L15.4 0.95Q16.5 0.2 17.3 1.05Q18.1 1.9 17.2 2.9L9.6 10.3Z" fill="none" stroke="#3d6fa6" stroke-width="1.3" stroke-linejoin="round"/></svg>
<svg class="b" style="left:1680.00px;top:331.52px;" width="16" height="19" viewBox="0 0 16 19"><path d="M0.9 4.3H15.1" stroke="#cf4a5b" stroke-width="1.5"/><path d="M5.6 4.1Q5.6 1.6 8 1.6Q10.4 1.6 10.4 4.1" fill="none" stroke="#cf4a5b" stroke-width="1.5"/><path d="M2.4 4.5L3.2 16.3Q3.3 17.5 4.5 17.5H11.5Q12.7 17.5 12.8 16.3L13.6 4.5" fill="none" stroke="#cf4a5b" stroke-width="1.5"/><path d="M5.6 7.4v7.2M8 7.4v7.2M10.4 7.4v7.2" stroke="#cf4a5b" stroke-width="1.3"/></svg>
<div class="b" style="left:293.00px;top:372.10px;width:20.00px;height:20.00px;background:#4cae4f;border-radius:50%;box-shadow:1.5px 1.5px 2px rgba(0,0,0,0.28)"></div>
<div class="t" style="left:331.00px;top:376.83px;font-size:13.2px;line-height:13.2px;font-weight:400;color:#222;transform:scaleX(0.955);transform-origin:0 0;-webkit-text-stroke:0.2px #222;">T-000039</div>
<svg class="b" style="left:392.00px;top:376.90px;" width="28" height="11" viewBox="0 0 28 11"><path d="M0.9 1.6l1 .9 2-2.2" fill="none" stroke="#3f5f85" stroke-width="1"/><path d="M5.1 0.9h7.5M5.1 5h7.5M5.1 9.2h7.5" stroke="#7ea2c9" stroke-width="1.6"/><path d="M16.2 3.3l5.8 5.8 5.8-5.8" fill="none" stroke="#4577b3" stroke-width="1.25"/></svg>
<div class="t" style="left:559.20px;top:374.37px;font-size:16.1px;line-height:16.1px;font-weight:400;color:#141414;">RH - Seleção candidatos responsável loja</div>
<div class="t" style="left:885.70px;top:374.76px;font-size:16px;line-height:16px;font-weight:400;color:#141414;">Direção RH</div>
<div class="b" style="left:1063.00px;top:370.40px;width:63.00px;height:23.40px;border:1px solid #55ab7a;border-radius:3px;box-sizing:border-box"></div>
<div class="t" style="left:894.50px;width:400px;text-align:center;top:376.75px;font-size:11.4px;line-height:11.4px;font-weight:400;color:#3a9862;-webkit-text-stroke:0.25px #3a9862;">Normal</div>
<div class="t" style="left:1002.00px;width:400px;text-align:center;top:377.98px;font-size:12.9px;line-height:12.9px;font-weight:400;color:#222;-webkit-text-stroke:0.2px #222;">2026-02-28</div>
<div class="t" style="left:1131.00px;width:400px;text-align:center;top:377.98px;font-size:12.9px;line-height:12.9px;font-weight:400;color:#222;-webkit-text-stroke:0.2px #222;">2026-03-05</div>
<div class="t" style="left:1403.80px;top:376.63px;font-size:11.3px;line-height:11.3px;font-weight:400;color:#222;transform:scaleX(0.82);transform-origin:0 0;-webkit-text-stroke:0.2px #222;">0</div>
<div class="b" style="left:1417.00px;top:375.40px;width:94.70px;height:12.00px;background:#d6d6d6;border-radius:4px"></div>
<div class="b" style="left:1417px;top:375.40px;width:94.70px;height:12px;background:#3fa24d;border-radius:4px 0 0 4px;border-radius:4px;overflow:visible"><div style="position:absolute;left:0;top:0;width:94.70px;text-align:center;font-size:10.6px;line-height:14px;color:#fff;transform:scaleX(0.92)">100%</div></div>
<div class="t" style="left:1125.80px;width:400px;text-align:right;top:376.63px;font-size:11.3px;line-height:11.3px;font-weight:400;color:#222;transform:scaleX(0.82);transform-origin:400px 0;-webkit-text-stroke:0.2px #222;">2</div>
<svg class="b" style="left:1542.00px;top:374.90px;" width="21" height="13" viewBox="0 0 21 13"><path d="M0.9 6.5Q10.5 -3.6 20.1 6.5Q10.5 16.6 0.9 6.5Z" fill="none" stroke="#3d6fa6" stroke-width="1.5" stroke-linejoin="round"/><circle cx="10.5" cy="6.5" r="3.7" fill="none" stroke="#3d6fa6" stroke-width="1.7"/><circle cx="10.5" cy="6.3" r="1.7" fill="#3d6fa6"/></svg>
<svg class="b" style="left:1579.00px;top:372.90px;" width="14" height="18" viewBox="0 0 14 18"><path d="M0.75 0.75H9L13.25 5V17.25H0.75Z" fill="none" stroke="#3d6fa6" stroke-width="1.5" stroke-linejoin="miter"/><path d="M9.4 1.3L12.7 4.6H9.4Z" fill="#3d6fa6" fill-opacity="0.45"/><path d="M4.2 6.4L9.4 13.7M9.4 6.4L4.2 13.7" stroke="#3d6fa6" stroke-width="1.35"/></svg>
<svg class="b" style="left:1609.00px;top:372.90px;" width="19" height="18" viewBox="0 0 19 18"><path d="M11.6 3.3V0.75H1.25V13.6H7" fill="none" stroke="#3d6fa6" stroke-width="1.5"/><rect x="7.95" y="4.05" width="10.3" height="12.2" fill="none" stroke="#3d6fa6" stroke-width="1.5"/></svg>
<svg class="b" style="left:1642.00px;top:372.90px;" width="19" height="18" viewBox="0 0 19 18"><path d="M9.6 4.05H1.95V15.95H14.05V8.6" fill="none" stroke="#3d6fa6" stroke-width="1.5"/><path d="M6.9 11.2L7.6 8.2L15.4 0.95Q16.5 0.2 17.3 1.05Q18.1 1.9 17.2 2.9L9.6 10.3Z" fill="none" stroke="#3d6fa6" stroke-width="1.3" stroke-linejoin="round"/></svg>
<svg class="b" style="left:1680.00px;top:371.90px;" width="16" height="19" viewBox="0 0 16 19"><path d="M0.9 4.3H15.1" stroke="#cf4a5b" stroke-width="1.5"/><path d="M5.6 4.1Q5.6 1.6 8 1.6Q10.4 1.6 10.4 4.1" fill="none" stroke="#cf4a5b" stroke-width="1.5"/><path d="M2.4 4.5L3.2 16.3Q3.3 17.5 4.5 17.5H11.5Q12.7 17.5 12.8 16.3L13.6 4.5" fill="none" stroke="#cf4a5b" stroke-width="1.5"/><path d="M5.6 7.4v7.2M8 7.4v7.2M10.4 7.4v7.2" stroke="#cf4a5b" stroke-width="1.3"/></svg>
<div class="b" style="left:293.00px;top:412.48px;width:20.00px;height:20.00px;background:#c9202e;border-radius:50%;box-shadow:1.5px 1.5px 2px rgba(0,0,0,0.28)"></div>
<div class="t" style="left:331.00px;top:417.21px;font-size:13.2px;line-height:13.2px;font-weight:400;color:#222;transform:scaleX(0.955);transform-origin:0 0;-webkit-text-stroke:0.2px #222;">T-000038</div>
<svg class="b" style="left:392.00px;top:417.28px;" width="28" height="11" viewBox="0 0 28 11"><path d="M0.9 1.6l1 .9 2-2.2" fill="none" stroke="#3f5f85" stroke-width="1"/><path d="M5.1 0.9h7.5M5.1 5h7.5M5.1 9.2h7.5" stroke="#7ea2c9" stroke-width="1.6"/><path d="M16.2 3.3l5.8 5.8 5.8-5.8" fill="none" stroke="#4577b3" stroke-width="1.25"/></svg>
<div class="t" style="left:559.20px;top:414.17px;font-size:16.1px;line-height:16.1px;font-weight:400;color:#141414;">LOJA - Afixar horário</div>
<div class="t" style="left:884.50px;top:404.16px;font-size:16px;line-height:16px;font-weight:400;color:#141414;">Responsavel</div>
<div class="t" style="left:884.50px;top:424.16px;font-size:16px;line-height:16px;font-weight:400;color:#141414;">Regional</div>
<div class="b" style="left:1063.00px;top:410.78px;width:63.00px;height:23.40px;border:1px solid #55ab7a;border-radius:3px;box-sizing:border-box"></div>
<div class="t" style="left:894.50px;width:400px;text-align:center;top:417.13px;font-size:11.4px;line-height:11.4px;font-weight:400;color:#3a9862;-webkit-text-stroke:0.25px #3a9862;">Normal</div>
<div class="t" style="left:1002.00px;width:400px;text-align:center;top:418.36px;font-size:12.9px;line-height:12.9px;font-weight:400;color:#222;-webkit-text-stroke:0.2px #222;">2026-02-26</div>
<div class="t" style="left:1131.00px;width:400px;text-align:center;top:418.36px;font-size:12.9px;line-height:12.9px;font-weight:400;color:#222;-webkit-text-stroke:0.2px #222;">2026-03-01</div>
<div class="t" style="left:1403.80px;top:417.01px;font-size:11.3px;line-height:11.3px;font-weight:400;color:#222;transform:scaleX(0.82);transform-origin:0 0;-webkit-text-stroke:0.2px #222;">0</div>
<div class="b" style="left:1417.00px;top:415.78px;width:91.00px;height:12.00px;background:#d6d6d6;border-radius:4px"></div>
<div class="b" style="left:1417px;top:415.78px;width:89.18px;height:12px;background:#3fa24d;border-radius:4px 0 0 4px;overflow:visible"><div style="position:absolute;left:0;top:0;width:89.18px;text-align:center;font-size:10.6px;line-height:14px;color:#fff;transform:scaleX(0.92)">98%</div></div>
<div class="t" style="left:1125.80px;width:400px;text-align:right;top:417.01px;font-size:11.3px;line-height:11.3px;font-weight:400;color:#222;transform:scaleX(0.82);transform-origin:400px 0;-webkit-text-stroke:0.2px #222;">47</div>
<svg class="b" style="left:1542.00px;top:415.28px;" width="21" height="13" viewBox="0 0 21 13"><path d="M0.9 6.5Q10.5 -3.6 20.1 6.5Q10.5 16.6 0.9 6.5Z" fill="none" stroke="#3d6fa6" stroke-width="1.5" stroke-linejoin="round"/><circle cx="10.5" cy="6.5" r="3.7" fill="none" stroke="#3d6fa6" stroke-width="1.7"/><circle cx="10.5" cy="6.3" r="1.7" fill="#3d6fa6"/></svg>
<svg class="b" style="left:1579.00px;top:413.28px;" width="14" height="18" viewBox="0 0 14 18"><path d="M0.75 0.75H9L13.25 5V17.25H0.75Z" fill="none" stroke="#3d6fa6" stroke-width="1.5" stroke-linejoin="miter"/><path d="M9.4 1.3L12.7 4.6H9.4Z" fill="#3d6fa6" fill-opacity="0.45"/><path d="M4.2 6.4L9.4 13.7M9.4 6.4L4.2 13.7" stroke="#3d6fa6" stroke-width="1.35"/></svg>
<svg class="b" style="left:1609.00px;top:413.28px;" width="19" height="18" viewBox="0 0 19 18"><path d="M11.6 3.3V0.75H1.25V13.6H7" fill="none" stroke="#3d6fa6" stroke-width="1.5"/><rect x="7.95" y="4.05" width="10.3" height="12.2" fill="none" stroke="#3d6fa6" stroke-width="1.5"/></svg>
<svg class="b" style="left:1642.00px;top:413.28px;" width="19" height="18" viewBox="0 0 19 18"><path d="M9.6 4.05H1.95V15.95H14.05V8.6" fill="none" stroke="#3d6fa6" stroke-width="1.5"/><path d="M6.9 11.2L7.6 8.2L15.4 0.95Q16.5 0.2 17.3 1.05Q18.1 1.9 17.2 2.9L9.6 10.3Z" fill="none" stroke="#3d6fa6" stroke-width="1.3" stroke-linejoin="round"/></svg>
<svg class="b" style="left:1680.00px;top:412.28px;" width="16" height="19" viewBox="0 0 16 19"><path d="M0.9 4.3H15.1" stroke="#cf4a5b" stroke-width="1.5"/><path d="M5.6 4.1Q5.6 1.6 8 1.6Q10.4 1.6 10.4 4.1" fill="none" stroke="#cf4a5b" stroke-width="1.5"/><path d="M2.4 4.5L3.2 16.3Q3.3 17.5 4.5 17.5H11.5Q12.7 17.5 12.8 16.3L13.6 4.5" fill="none" stroke="#cf4a5b" stroke-width="1.5"/><path d="M5.6 7.4v7.2M8 7.4v7.2M10.4 7.4v7.2" stroke="#cf4a5b" stroke-width="1.3"/></svg>
<div class="b" style="left:293.00px;top:452.86px;width:20.00px;height:20.00px;background:#c9202e;border-radius:50%;box-shadow:1.5px 1.5px 2px rgba(0,0,0,0.28)"></div>
<div class="t" style="left:331.00px;top:457.59px;font-size:13.2px;line-height:13.2px;font-weight:400;color:#222;transform:scaleX(0.955);transform-origin:0 0;-webkit-text-stroke:0.2px #222;">T-000037</div>
<svg class="b" style="left:392.00px;top:457.66px;" width="28" height="11" viewBox="0 0 28 11"><path d="M0.9 1.6l1 .9 2-2.2" fill="none" stroke="#3f5f85" stroke-width="1"/><path d="M5.1 0.9h7.5M5.1 5h7.5M5.1 9.2h7.5" stroke="#7ea2c9" stroke-width="1.6"/><path d="M16.2 3.3l5.8 5.8 5.8-5.8" fill="none" stroke="#4577b3" stroke-width="1.25"/></svg>
<div class="t" style="left:559.20px;top:453.97px;font-size:16.1px;line-height:16.1px;font-weight:400;color:#141414;">LOJA - Enviar mapa folgas</div>
<div class="t" style="left:885.70px;top:445.16px;font-size:16px;line-height:16px;font-weight:400;color:#141414;">Responsavel</div>
<div class="t" style="left:885.70px;top:465.16px;font-size:16px;line-height:16px;font-weight:400;color:#141414;">Regional</div>
<div class="b" style="left:1063.00px;top:451.16px;width:63.00px;height:23.40px;border:1px solid #55ab7a;border-radius:3px;box-sizing:border-box"></div>
<div class="t" style="left:894.50px;width:400px;text-align:center;top:457.51px;font-size:11.4px;line-height:11.4px;font-weight:400;color:#3a9862;-webkit-text-stroke:0.25px #3a9862;">Normal</div>
<div class="t" style="left:1002.00px;width:400px;text-align:center;top:458.74px;font-size:12.9px;line-height:12.9px;font-weight:400;color:#222;-webkit-text-stroke:0.2px #222;">2026-02-26</div>
<div class="t" style="left:1131.00px;width:400px;text-align:center;top:458.74px;font-size:12.9px;line-height:12.9px;font-weight:400;color:#222;-webkit-text-stroke:0.2px #222;">2026-03-01</div>
<div class="t" style="left:1403.80px;top:457.39px;font-size:11.3px;line-height:11.3px;font-weight:400;color:#222;transform:scaleX(0.82);transform-origin:0 0;-webkit-text-stroke:0.2px #222;">0</div>
<div class="b" style="left:1417.00px;top:456.16px;width:91.00px;height:12.00px;background:#d6d6d6;border-radius:4px"></div>
<div class="b" style="left:1417px;top:456.16px;width:89.18px;height:12px;background:#3fa24d;border-radius:4px 0 0 4px;overflow:visible"><div style="position:absolute;left:0;top:0;width:89.18px;text-align:center;font-size:10.6px;line-height:14px;color:#fff;transform:scaleX(0.92)">98%</div></div>
<div class="t" style="left:1125.80px;width:400px;text-align:right;top:457.39px;font-size:11.3px;line-height:11.3px;font-weight:400;color:#222;transform:scaleX(0.82);transform-origin:400px 0;-webkit-text-stroke:0.2px #222;">55</div>
<svg class="b" style="left:1542.00px;top:455.66px;" width="21" height="13" viewBox="0 0 21 13"><path d="M0.9 6.5Q10.5 -3.6 20.1 6.5Q10.5 16.6 0.9 6.5Z" fill="none" stroke="#3d6fa6" stroke-width="1.5" stroke-linejoin="round"/><circle cx="10.5" cy="6.5" r="3.7" fill="none" stroke="#3d6fa6" stroke-width="1.7"/><circle cx="10.5" cy="6.3" r="1.7" fill="#3d6fa6"/></svg>
<svg class="b" style="left:1579.00px;top:453.66px;" width="14" height="18" viewBox="0 0 14 18"><path d="M0.75 0.75H9L13.25 5V17.25H0.75Z" fill="none" stroke="#3d6fa6" stroke-width="1.5" stroke-linejoin="miter"/><path d="M9.4 1.3L12.7 4.6H9.4Z" fill="#3d6fa6" fill-opacity="0.45"/><path d="M4.2 6.4L9.4 13.7M9.4 6.4L4.2 13.7" stroke="#3d6fa6" stroke-width="1.35"/></svg>
<svg class="b" style="left:1609.00px;top:453.66px;" width="19" height="18" viewBox="0 0 19 18"><path d="M11.6 3.3V0.75H1.25V13.6H7" fill="none" stroke="#3d6fa6" stroke-width="1.5"/><rect x="7.95" y="4.05" width="10.3" height="12.2" fill="none" stroke="#3d6fa6" stroke-width="1.5"/></svg>
<svg class="b" style="left:1642.00px;top:453.66px;" width="19" height="18" viewBox="0 0 19 18"><path d="M9.6 4.05H1.95V15.95H14.05V8.6" fill="none" stroke="#3d6fa6" stroke-width="1.5"/><path d="M6.9 11.2L7.6 8.2L15.4 0.95Q16.5 0.2 17.3 1.05Q18.1 1.9 17.2 2.9L9.6 10.3Z" fill="none" stroke="#3d6fa6" stroke-width="1.3" stroke-linejoin="round"/></svg>
<svg class="b" style="left:1680.00px;top:452.66px;" width="16" height="19" viewBox="0 0 16 19"><path d="M0.9 4.3H15.1" stroke="#cf4a5b" stroke-width="1.5"/><path d="M5.6 4.1Q5.6 1.6 8 1.6Q10.4 1.6 10.4 4.1" fill="none" stroke="#cf4a5b" stroke-width="1.5"/><path d="M2.4 4.5L3.2 16.3Q3.3 17.5 4.5 17.5H11.5Q12.7 17.5 12.8 16.3L13.6 4.5" fill="none" stroke="#cf4a5b" stroke-width="1.5"/><path d="M5.6 7.4v7.2M8 7.4v7.2M10.4 7.4v7.2" stroke="#cf4a5b" stroke-width="1.3"/></svg>
<div class="b" style="left:293.00px;top:493.24px;width:20.00px;height:20.00px;background:#c9202e;border-radius:50%;box-shadow:1.5px 1.5px 2px rgba(0,0,0,0.28)"></div>
<div class="t" style="left:331.00px;top:497.97px;font-size:13.2px;line-height:13.2px;font-weight:400;color:#222;transform:scaleX(0.955);transform-origin:0 0;-webkit-text-stroke:0.2px #222;">T-000036</div>
<svg class="b" style="left:392.00px;top:498.04px;" width="28" height="11" viewBox="0 0 28 11"><path d="M0.9 1.6l1 .9 2-2.2" fill="none" stroke="#3f5f85" stroke-width="1"/><path d="M5.1 0.9h7.5M5.1 5h7.5M5.1 9.2h7.5" stroke="#7ea2c9" stroke-width="1.6"/><path d="M16.2 3.3l5.8 5.8 5.8-5.8" fill="none" stroke="#4577b3" stroke-width="1.25"/></svg>
<div class="t" style="left:559.20px;top:495.37px;font-size:16.1px;line-height:16.1px;font-weight:400;color:#141414;">LOJA - Enviar mapa férias</div>
<div class="t" style="left:886.90px;top:485.76px;font-size:16px;line-height:16px;font-weight:400;color:#141414;">Responsavel</div>
<div class="t" style="left:886.90px;top:505.56px;font-size:16px;line-height:16px;font-weight:400;color:#141414;">Regional</div>
<div class="b" style="left:1063.00px;top:491.54px;width:63.00px;height:23.40px;border:1px solid #55ab7a;border-radius:3px;box-sizing:border-box"></div>
<div class="t" style="left:894.50px;width:400px;text-align:center;top:497.89px;font-size:11.4px;line-height:11.4px;font-weight:400;color:#3a9862;-webkit-text-stroke:0.25px #3a9862;">Normal</div>
<div class="t" style="left:1002.00px;width:400px;text-align:center;top:499.12px;font-size:12.9px;line-height:12.9px;font-weight:400;color:#222;-webkit-text-stroke:0.2px #222;">2026-02-01</div>
<div class="t" style="left:1131.00px;width:400px;text-align:center;top:499.12px;font-size:12.9px;line-height:12.9px;font-weight:400;color:#222;-webkit-text-stroke:0.2px #222;">2026-03-01</div>
<div class="t" style="left:1403.80px;top:497.77px;font-size:11.3px;line-height:11.3px;font-weight:400;color:#222;transform:scaleX(0.82);transform-origin:0 0;-webkit-text-stroke:0.2px #222;">0</div>
<div class="b" style="left:1417.00px;top:496.54px;width:91.00px;height:12.00px;background:#d6d6d6;border-radius:4px"></div>
<div class="b" style="left:1417px;top:496.54px;width:89.18px;height:12px;background:#3fa24d;border-radius:4px 0 0 4px;overflow:visible"><div style="position:absolute;left:0;top:0;width:89.18px;text-align:center;font-size:10.6px;line-height:14px;color:#fff;transform:scaleX(0.92)">98%</div></div>
<div class="t" style="left:1125.80px;width:400px;text-align:right;top:497.77px;font-size:11.3px;line-height:11.3px;font-weight:400;color:#222;transform:scaleX(0.82);transform-origin:400px 0;-webkit-text-stroke:0.2px #222;">52</div>
<svg class="b" style="left:1542.00px;top:496.04px;" width="21" height="13" viewBox="0 0 21 13"><path d="M0.9 6.5Q10.5 -3.6 20.1 6.5Q10.5 16.6 0.9 6.5Z" fill="none" stroke="#3d6fa6" stroke-width="1.5" stroke-linejoin="round"/><circle cx="10.5" cy="6.5" r="3.7" fill="none" stroke="#3d6fa6" stroke-width="1.7"/><circle cx="10.5" cy="6.3" r="1.7" fill="#3d6fa6"/></svg>
<svg class="b" style="left:1579.00px;top:494.04px;" width="14" height="18" viewBox="0 0 14 18"><path d="M0.75 0.75H9L13.25 5V17.25H0.75Z" fill="none" stroke="#3d6fa6" stroke-width="1.5" stroke-linejoin="miter"/><path d="M9.4 1.3L12.7 4.6H9.4Z" fill="#3d6fa6" fill-opacity="0.45"/><path d="M4.2 6.4L9.4 13.7M9.4 6.4L4.2 13.7" stroke="#3d6fa6" stroke-width="1.35"/></svg>
<svg class="b" style="left:1609.00px;top:494.04px;" width="19" height="18" viewBox="0 0 19 18"><path d="M11.6 3.3V0.75H1.25V13.6H7" fill="none" stroke="#3d6fa6" stroke-width="1.5"/><rect x="7.95" y="4.05" width="10.3" height="12.2" fill="none" stroke="#3d6fa6" stroke-width="1.5"/></svg>
<svg class="b" style="left:1642.00px;top:494.04px;" width="19" height="18" viewBox="0 0 19 18"><path d="M9.6 4.05H1.95V15.95H14.05V8.6" fill="none" stroke="#3d6fa6" stroke-width="1.5"/><path d="M6.9 11.2L7.6 8.2L15.4 0.95Q16.5 0.2 17.3 1.05Q18.1 1.9 17.2 2.9L9.6 10.3Z" fill="none" stroke="#3d6fa6" stroke-width="1.3" stroke-linejoin="round"/></svg>
<svg class="b" style="left:1680.00px;top:493.04px;" width="16" height="19" viewBox="0 0 16 19"><path d="M0.9 4.3H15.1" stroke="#cf4a5b" stroke-width="1.5"/><path d="M5.6 4.1Q5.6 1.6 8 1.6Q10.4 1.6 10.4 4.1" fill="none" stroke="#cf4a5b" stroke-width="1.5"/><path d="M2.4 4.5L3.2 16.3Q3.3 17.5 4.5 17.5H11.5Q12.7 17.5 12.8 16.3L13.6 4.5" fill="none" stroke="#cf4a5b" stroke-width="1.5"/><path d="M5.6 7.4v7.2M8 7.4v7.2M10.4 7.4v7.2" stroke="#cf4a5b" stroke-width="1.3"/></svg>
<div class="b" style="left:293.00px;top:533.62px;width:20.00px;height:20.00px;background:#4cae4f;border-radius:50%;box-shadow:1.5px 1.5px 2px rgba(0,0,0,0.28)"></div>
<div class="t" style="left:331.00px;top:538.35px;font-size:13.2px;line-height:13.2px;font-weight:400;color:#222;transform:scaleX(0.955);transform-origin:0 0;-webkit-text-stroke:0.2px #222;">T-000035</div>
<svg class="b" style="left:392.00px;top:538.42px;" width="28" height="11" viewBox="0 0 28 11"><path d="M0.9 1.6l1 .9 2-2.2" fill="none" stroke="#3f5f85" stroke-width="1"/><path d="M5.1 0.9h7.5M5.1 5h7.5M5.1 9.2h7.5" stroke="#7ea2c9" stroke-width="1.6"/><path d="M16.2 3.3l5.8 5.8 5.8-5.8" fill="none" stroke="#4577b3" stroke-width="1.25"/></svg>
<div class="t" style="left:560.30px;top:535.37px;font-size:16.1px;line-height:16.1px;font-weight:400;color:#141414;">DR - Agendar meeting região NORTE</div>
<div class="t" style="left:884.50px;top:536.16px;font-size:16px;line-height:16px;font-weight:400;color:#141414;">Direção Comercial</div>
<div class="b" style="left:1056.00px;top:531.92px;width:77.00px;height:23.40px;border:1px solid #5a84b8;border-radius:3px;box-sizing:border-box"></div>
<div class="t" style="left:894.50px;width:400px;text-align:center;top:538.19px;font-size:11.5px;line-height:11.5px;font-weight:400;color:#4677b3;-webkit-text-stroke:0.25px #4677b3;">Prioritário</div>
<div class="t" style="left:1002.00px;width:400px;text-align:center;top:539.50px;font-size:12.9px;line-height:12.9px;font-weight:400;color:#222;-webkit-text-stroke:0.2px #222;">2026-02-23</div>
<div class="t" style="left:1131.00px;width:400px;text-align:center;top:539.50px;font-size:12.9px;line-height:12.9px;font-weight:400;color:#222;-webkit-text-stroke:0.2px #222;">2026-02-25</div>
<div class="t" style="left:1403.80px;top:538.15px;font-size:11.3px;line-height:11.3px;font-weight:400;color:#222;transform:scaleX(0.82);transform-origin:0 0;-webkit-text-stroke:0.2px #222;">0</div>
<div class="b" style="left:1417.00px;top:536.92px;width:94.70px;height:12.00px;background:#d6d6d6;border-radius:4px"></div>
<div class="b" style="left:1417px;top:536.92px;width:94.70px;height:12px;background:#3fa24d;border-radius:4px 0 0 4px;border-radius:4px;overflow:visible"><div style="position:absolute;left:0;top:0;width:94.70px;text-align:center;font-size:10.6px;line-height:14px;color:#fff;transform:scaleX(0.92)">100%</div></div>
<div class="t" style="left:1125.80px;width:400px;text-align:right;top:538.15px;font-size:11.3px;line-height:11.3px;font-weight:400;color:#222;transform:scaleX(0.82);transform-origin:400px 0;-webkit-text-stroke:0.2px #222;">1</div>
<svg class="b" style="left:1542.00px;top:536.42px;" width="21" height="13" viewBox="0 0 21 13"><path d="M0.9 6.5Q10.5 -3.6 20.1 6.5Q10.5 16.6 0.9 6.5Z" fill="none" stroke="#3d6fa6" stroke-width="1.5" stroke-linejoin="round"/><circle cx="10.5" cy="6.5" r="3.7" fill="none" stroke="#3d6fa6" stroke-width="1.7"/><circle cx="10.5" cy="6.3" r="1.7" fill="#3d6fa6"/></svg>
<svg class="b" style="left:1579.00px;top:534.42px;" width="14" height="18" viewBox="0 0 14 18"><path d="M0.75 0.75H9L13.25 5V17.25H0.75Z" fill="none" stroke="#3d6fa6" stroke-width="1.5" stroke-linejoin="miter"/><path d="M9.4 1.3L12.7 4.6H9.4Z" fill="#3d6fa6" fill-opacity="0.45"/><path d="M4.2 6.4L9.4 13.7M9.4 6.4L4.2 13.7" stroke="#3d6fa6" stroke-width="1.35"/></svg>
<svg class="b" style="left:1609.00px;top:534.42px;" width="19" height="18" viewBox="0 0 19 18"><path d="M11.6 3.3V0.75H1.25V13.6H7" fill="none" stroke="#3d6fa6" stroke-width="1.5"/><rect x="7.95" y="4.05" width="10.3" height="12.2" fill="none" stroke="#3d6fa6" stroke-width="1.5"/></svg>
<svg class="b" style="left:1642.00px;top:534.42px;" width="19" height="18" viewBox="0 0 19 18"><path d="M9.6 4.05H1.95V15.95H14.05V8.6" fill="none" stroke="#3d6fa6" stroke-width="1.5"/><path d="M6.9 11.2L7.6 8.2L15.4 0.95Q16.5 0.2 17.3 1.05Q18.1 1.9 17.2 2.9L9.6 10.3Z" fill="none" stroke="#3d6fa6" stroke-width="1.3" stroke-linejoin="round"/></svg>
<svg class="b" style="left:1680.00px;top:533.42px;" width="16" height="19" viewBox="0 0 16 19"><path d="M0.9 4.3H15.1" stroke="#cf4a5b" stroke-width="1.5"/><path d="M5.6 4.1Q5.6 1.6 8 1.6Q10.4 1.6 10.4 4.1" fill="none" stroke="#cf4a5b" stroke-width="1.5"/><path d="M2.4 4.5L3.2 16.3Q3.3 17.5 4.5 17.5H11.5Q12.7 17.5 12.8 16.3L13.6 4.5" fill="none" stroke="#cf4a5b" stroke-width="1.5"/><path d="M5.6 7.4v7.2M8 7.4v7.2M10.4 7.4v7.2" stroke="#cf4a5b" stroke-width="1.3"/></svg>
<div class="b" style="left:293.00px;top:574.00px;width:20.00px;height:20.00px;background:#4cae4f;border-radius:50%;box-shadow:1.5px 1.5px 2px rgba(0,0,0,0.28)"></div>
<div class="t" style="left:331.00px;top:578.73px;font-size:13.2px;line-height:13.2px;font-weight:400;color:#222;transform:scaleX(0.955);transform-origin:0 0;-webkit-text-stroke:0.2px #222;">T-000034</div>
<svg class="b" style="left:392.00px;top:578.80px;" width="28" height="11" viewBox="0 0 28 11"><path d="M0.9 1.6l1 .9 2-2.2" fill="none" stroke="#3f5f85" stroke-width="1"/><path d="M5.1 0.9h7.5M5.1 5h7.5M5.1 9.2h7.5" stroke="#7ea2c9" stroke-width="1.6"/><path d="M16.2 3.3l5.8 5.8 5.8-5.8" fill="none" stroke="#4577b3" stroke-width="1.25"/></svg>
<div class="t" style="left:559.20px;top:576.27px;font-size:16.1px;line-height:16.1px;font-weight:400;color:#141414;">DR - Agendar formação responsáveis loja</div>
<div class="t" style="left:886.40px;top:566.26px;font-size:16px;line-height:16px;font-weight:400;color:#141414;">Responsavel</div>
<div class="t" style="left:886.40px;top:586.36px;font-size:16px;line-height:16px;font-weight:400;color:#141414;">Regional</div>
<div class="b" style="left:1063.00px;top:572.30px;width:63.00px;height:23.40px;border:1px solid #55ab7a;border-radius:3px;box-sizing:border-box"></div>
<div class="t" style="left:894.50px;width:400px;text-align:center;top:578.65px;font-size:11.4px;line-height:11.4px;font-weight:400;color:#3a9862;-webkit-text-stroke:0.25px #3a9862;">Normal</div>
<div class="t" style="left:1002.00px;width:400px;text-align:center;top:579.88px;font-size:12.9px;line-height:12.9px;font-weight:400;color:#222;-webkit-text-stroke:0.2px #222;">2026-02-23</div>
<div class="t" style="left:1131.00px;width:400px;text-align:center;top:579.88px;font-size:12.9px;line-height:12.9px;font-weight:400;color:#222;-webkit-text-stroke:0.2px #222;">2026-03-06</div>
<div class="t" style="left:1403.80px;top:578.53px;font-size:11.3px;line-height:11.3px;font-weight:400;color:#222;transform:scaleX(0.82);transform-origin:0 0;-webkit-text-stroke:0.2px #222;">0</div>
<div class="b" style="left:1417.00px;top:577.30px;width:91.00px;height:12.00px;background:#d6d6d6;border-radius:4px"></div>
<div class="b" style="left:1417px;top:577.30px;width:91.00px;height:12px;background:#3fa24d;border-radius:4px 0 0 4px;border-radius:4px;overflow:visible"><div style="position:absolute;left:0;top:0;width:91.00px;text-align:center;font-size:10.6px;line-height:14px;color:#fff;transform:scaleX(0.92)">100%</div></div>
<div class="t" style="left:1125.80px;width:400px;text-align:right;top:578.53px;font-size:11.3px;line-height:11.3px;font-weight:400;color:#222;transform:scaleX(0.82);transform-origin:400px 0;-webkit-text-stroke:0.2px #222;">14</div>
<svg class="b" style="left:1542.00px;top:576.80px;" width="21" height="13" viewBox="0 0 21 13"><path d="M0.9 6.5Q10.5 -3.6 20.1 6.5Q10.5 16.6 0.9 6.5Z" fill="none" stroke="#3d6fa6" stroke-width="1.5" stroke-linejoin="round"/><circle cx="10.5" cy="6.5" r="3.7" fill="none" stroke="#3d6fa6" stroke-width="1.7"/><circle cx="10.5" cy="6.3" r="1.7" fill="#3d6fa6"/></svg>
<svg class="b" style="left:1579.00px;top:574.80px;" width="14" height="18" viewBox="0 0 14 18"><path d="M0.75 0.75H9L13.25 5V17.25H0.75Z" fill="none" stroke="#3d6fa6" stroke-width="1.5" stroke-linejoin="miter"/><path d="M9.4 1.3L12.7 4.6H9.4Z" fill="#3d6fa6" fill-opacity="0.45"/><path d="M4.2 6.4L9.4 13.7M9.4 6.4L4.2 13.7" stroke="#3d6fa6" stroke-width="1.35"/></svg>
<svg class="b" style="left:1609.00px;top:574.80px;" width="19" height="18" viewBox="0 0 19 18"><path d="M11.6 3.3V0.75H1.25V13.6H7" fill="none" stroke="#3d6fa6" stroke-width="1.5"/><rect x="7.95" y="4.05" width="10.3" height="12.2" fill="none" stroke="#3d6fa6" stroke-width="1.5"/></svg>
<svg class="b" style="left:1642.00px;top:574.80px;" width="19" height="18" viewBox="0 0 19 18"><path d="M9.6 4.05H1.95V15.95H14.05V8.6" fill="none" stroke="#3d6fa6" stroke-width="1.5"/><path d="M6.9 11.2L7.6 8.2L15.4 0.95Q16.5 0.2 17.3 1.05Q18.1 1.9 17.2 2.9L9.6 10.3Z" fill="none" stroke="#3d6fa6" stroke-width="1.3" stroke-linejoin="round"/></svg>
<svg class="b" style="left:1680.00px;top:573.80px;" width="16" height="19" viewBox="0 0 16 19"><path d="M0.9 4.3H15.1" stroke="#cf4a5b" stroke-width="1.5"/><path d="M5.6 4.1Q5.6 1.6 8 1.6Q10.4 1.6 10.4 4.1" fill="none" stroke="#cf4a5b" stroke-width="1.5"/><path d="M2.4 4.5L3.2 16.3Q3.3 17.5 4.5 17.5H11.5Q12.7 17.5 12.8 16.3L13.6 4.5" fill="none" stroke="#cf4a5b" stroke-width="1.5"/><path d="M5.6 7.4v7.2M8 7.4v7.2M10.4 7.4v7.2" stroke="#cf4a5b" stroke-width="1.3"/></svg>
<div class="b" style="left:293.00px;top:614.38px;width:20.00px;height:20.00px;background:#4cae4f;border-radius:50%;box-shadow:1.5px 1.5px 2px rgba(0,0,0,0.28)"></div>
<div class="t" style="left:331.00px;top:619.11px;font-size:13.2px;line-height:13.2px;font-weight:400;color:#222;transform:scaleX(0.955);transform-origin:0 0;-webkit-text-stroke:0.2px #222;">T-000033</div>
<svg class="b" style="left:392.00px;top:619.18px;" width="28" height="11" viewBox="0 0 28 11"><path d="M0.9 1.6l1 .9 2-2.2" fill="none" stroke="#3f5f85" stroke-width="1"/><path d="M5.1 0.9h7.5M5.1 5h7.5M5.1 9.2h7.5" stroke="#7ea2c9" stroke-width="1.6"/><path d="M16.2 3.3l5.8 5.8 5.8-5.8" fill="none" stroke="#4577b3" stroke-width="1.25"/></svg>
<div class="t" style="left:559.20px;top:617.17px;font-size:16.1px;line-height:16.1px;font-weight:400;color:#141414;">MN - Mapa consumos manutenção</div>
<div class="t" style="left:886.40px;top:617.66px;font-size:16px;line-height:16px;font-weight:400;color:#141414;">admin</div>
<div class="b" style="left:1056.00px;top:612.68px;width:77.00px;height:23.40px;border:1px solid #5a84b8;border-radius:3px;box-sizing:border-box"></div>
<div class="t" style="left:894.50px;width:400px;text-align:center;top:618.95px;font-size:11.5px;line-height:11.5px;font-weight:400;color:#4677b3;-webkit-text-stroke:0.25px #4677b3;">Prioritário</div>
<div class="t" style="left:1002.00px;width:400px;text-align:center;top:620.26px;font-size:12.9px;line-height:12.9px;font-weight:400;color:#222;-webkit-text-stroke:0.2px #222;">2026-02-23</div>
<div class="t" style="left:1131.00px;width:400px;text-align:center;top:620.26px;font-size:12.9px;line-height:12.9px;font-weight:400;color:#222;-webkit-text-stroke:0.2px #222;">2026-03-06</div>
<div class="t" style="left:1403.80px;top:618.91px;font-size:11.3px;line-height:11.3px;font-weight:400;color:#222;transform:scaleX(0.82);transform-origin:0 0;-webkit-text-stroke:0.2px #222;">0</div>
<div class="b" style="left:1417.00px;top:617.68px;width:91.00px;height:12.00px;background:#d6d6d6;border-radius:4px"></div>
<div class="b" style="left:1417px;top:617.68px;width:91.00px;height:12px;background:#3fa24d;border-radius:4px 0 0 4px;border-radius:4px;overflow:visible"><div style="position:absolute;left:0;top:0;width:91.00px;text-align:center;font-size:10.6px;line-height:14px;color:#fff;transform:scaleX(0.92)">100%</div></div>
<div class="t" style="left:1125.80px;width:400px;text-align:right;top:618.91px;font-size:11.3px;line-height:11.3px;font-weight:400;color:#222;transform:scaleX(0.82);transform-origin:400px 0;-webkit-text-stroke:0.2px #222;">22</div>
<svg class="b" style="left:1542.00px;top:617.18px;" width="21" height="13" viewBox="0 0 21 13"><path d="M0.9 6.5Q10.5 -3.6 20.1 6.5Q10.5 16.6 0.9 6.5Z" fill="none" stroke="#3d6fa6" stroke-width="1.5" stroke-linejoin="round"/><circle cx="10.5" cy="6.5" r="3.7" fill="none" stroke="#3d6fa6" stroke-width="1.7"/><circle cx="10.5" cy="6.3" r="1.7" fill="#3d6fa6"/></svg>
<svg class="b" style="left:1579.00px;top:615.18px;" width="14" height="18" viewBox="0 0 14 18"><path d="M0.75 0.75H9L13.25 5V17.25H0.75Z" fill="none" stroke="#3d6fa6" stroke-width="1.5" stroke-linejoin="miter"/><path d="M9.4 1.3L12.7 4.6H9.4Z" fill="#3d6fa6" fill-opacity="0.45"/><path d="M4.2 6.4L9.4 13.7M9.4 6.4L4.2 13.7" stroke="#3d6fa6" stroke-width="1.35"/></svg>
<svg class="b" style="left:1609.00px;top:615.18px;" width="19" height="18" viewBox="0 0 19 18"><path d="M11.6 3.3V0.75H1.25V13.6H7" fill="none" stroke="#3d6fa6" stroke-width="1.5"/><rect x="7.95" y="4.05" width="10.3" height="12.2" fill="none" stroke="#3d6fa6" stroke-width="1.5"/></svg>
<svg class="b" style="left:1642.00px;top:615.18px;" width="19" height="18" viewBox="0 0 19 18"><path d="M9.6 4.05H1.95V15.95H14.05V8.6" fill="none" stroke="#3d6fa6" stroke-width="1.5"/><path d="M6.9 11.2L7.6 8.2L15.4 0.95Q16.5 0.2 17.3 1.05Q18.1 1.9 17.2 2.9L9.6 10.3Z" fill="none" stroke="#3d6fa6" stroke-width="1.3" stroke-linejoin="round"/></svg>
<svg class="b" style="left:1680.00px;top:614.18px;" width="16" height="19" viewBox="0 0 16 19"><path d="M0.9 4.3H15.1" stroke="#cf4a5b" stroke-width="1.5"/><path d="M5.6 4.1Q5.6 1.6 8 1.6Q10.4 1.6 10.4 4.1" fill="none" stroke="#cf4a5b" stroke-width="1.5"/><path d="M2.4 4.5L3.2 16.3Q3.3 17.5 4.5 17.5H11.5Q12.7 17.5 12.8 16.3L13.6 4.5" fill="none" stroke="#cf4a5b" stroke-width="1.5"/><path d="M5.6 7.4v7.2M8 7.4v7.2M10.4 7.4v7.2" stroke="#cf4a5b" stroke-width="1.3"/></svg>
<div class="b" style="left:293.00px;top:654.76px;width:20.00px;height:20.00px;background:#c9202e;border-radius:50%;box-shadow:1.5px 1.5px 2px rgba(0,0,0,0.28)"></div>
<div class="t" style="left:331.00px;top:659.49px;font-size:13.2px;line-height:13.2px;font-weight:400;color:#222;transform:scaleX(0.955);transform-origin:0 0;-webkit-text-stroke:0.2px #222;">T-000032</div>
<svg class="b" style="left:392.00px;top:659.56px;" width="28" height="11" viewBox="0 0 28 11"><path d="M0.9 1.6l1 .9 2-2.2" fill="none" stroke="#3f5f85" stroke-width="1"/><path d="M5.1 0.9h7.5M5.1 5h7.5M5.1 9.2h7.5" stroke="#7ea2c9" stroke-width="1.6"/><path d="M16.2 3.3l5.8 5.8 5.8-5.8" fill="none" stroke="#4577b3" stroke-width="1.25"/></svg>
<div class="t" style="left:560.30px;top:654.97px;font-size:16.1px;line-height:16.1px;font-weight:400;color:#141414;">IT - Verificação segurança portáteis</div>
<div class="t" style="left:886.40px;top:655.56px;font-size:16px;line-height:16px;font-weight:400;color:#141414;">Direção IT</div>
<div class="b" style="left:1056.00px;top:653.06px;width:77.00px;height:23.40px;border:1px solid #5a84b8;border-radius:3px;box-sizing:border-box"></div>
<div class="t" style="left:894.50px;width:400px;text-align:center;top:659.33px;font-size:11.5px;line-height:11.5px;font-weight:400;color:#4677b3;-webkit-text-stroke:0.25px #4677b3;">Prioritário</div>
<div class="t" style="left:1002.00px;width:400px;text-align:center;top:660.64px;font-size:12.9px;line-height:12.9px;font-weight:400;color:#222;-webkit-text-stroke:0.2px #222;">2026-02-23</div>
<div class="t" style="left:1131.00px;width:400px;text-align:center;top:660.64px;font-size:12.9px;line-height:12.9px;font-weight:400;color:#222;-webkit-text-stroke:0.2px #222;">2026-03-06</div>
<div class="t" style="left:1403.80px;top:659.29px;font-size:11.3px;line-height:11.3px;font-weight:400;color:#222;transform:scaleX(0.82);transform-origin:0 0;-webkit-text-stroke:0.2px #222;">0</div>
<div class="b" style="left:1417.00px;top:658.06px;width:94.70px;height:12.00px;background:#d6d6d6;border-radius:4px"></div>
<div class="b" style="left:1417px;top:658.06px;width:84.28px;height:12px;background:#3fa24d;border-radius:4px 0 0 4px;overflow:visible"><div style="position:absolute;left:0;top:0;width:84.28px;text-align:center;font-size:10.6px;line-height:14px;color:#fff;transform:scaleX(0.92)">89%</div></div>
<div class="t" style="left:1125.80px;width:400px;text-align:right;top:659.29px;font-size:11.3px;line-height:11.3px;font-weight:400;color:#222;transform:scaleX(0.82);transform-origin:400px 0;-webkit-text-stroke:0.2px #222;">9</div>
<svg class="b" style="left:1542.00px;top:657.56px;" width="21" height="13" viewBox="0 0 21 13"><path d="M0.9 6.5Q10.5 -3.6 20.1 6.5Q10.5 16.6 0.9 6.5Z" fill="none" stroke="#3d6fa6" stroke-width="1.5" stroke-linejoin="round"/><circle cx="10.5" cy="6.5" r="3.7" fill="none" stroke="#3d6fa6" stroke-width="1.7"/><circle cx="10.5" cy="6.3" r="1.7" fill="#3d6fa6"/></svg>
<svg class="b" style="left:1579.00px;top:655.56px;" width="14" height="18" viewBox="0 0 14 18"><path d="M0.75 0.75H9L13.25 5V17.25H0.75Z" fill="none" stroke="#3d6fa6" stroke-width="1.5" stroke-linejoin="miter"/><path d="M9.4 1.3L12.7 4.6H9.4Z" fill="#3d6fa6" fill-opacity="0.45"/><path d="M4.2 6.4L9.4 13.7M9.4 6.4L4.2 13.7" stroke="#3d6fa6" stroke-width="1.35"/></svg>
<svg class="b" style="left:1609.00px;top:655.56px;" width="19" height="18" viewBox="0 0 19 18"><path d="M11.6 3.3V0.75H1.25V13.6H7" fill="none" stroke="#3d6fa6" stroke-width="1.5"/><rect x="7.95" y="4.05" width="10.3" height="12.2" fill="none" stroke="#3d6fa6" stroke-width="1.5"/></svg>
<svg class="b" style="left:1642.00px;top:655.56px;" width="19" height="18" viewBox="0 0 19 18"><path d="M9.6 4.05H1.95V15.95H14.05V8.6" fill="none" stroke="#3d6fa6" stroke-width="1.5"/><path d="M6.9 11.2L7.6 8.2L15.4 0.95Q16.5 0.2 17.3 1.05Q18.1 1.9 17.2 2.9L9.6 10.3Z" fill="none" stroke="#3d6fa6" stroke-width="1.3" stroke-linejoin="round"/></svg>
<svg class="b" style="left:1680.00px;top:654.56px;" width="16" height="19" viewBox="0 0 16 19"><path d="M0.9 4.3H15.1" stroke="#cf4a5b" stroke-width="1.5"/><path d="M5.6 4.1Q5.6 1.6 8 1.6Q10.4 1.6 10.4 4.1" fill="none" stroke="#cf4a5b" stroke-width="1.5"/><path d="M2.4 4.5L3.2 16.3Q3.3 17.5 4.5 17.5H11.5Q12.7 17.5 12.8 16.3L13.6 4.5" fill="none" stroke="#cf4a5b" stroke-width="1.5"/><path d="M5.6 7.4v7.2M8 7.4v7.2M10.4 7.4v7.2" stroke="#cf4a5b" stroke-width="1.3"/></svg>
<div class="b" style="left:293.00px;top:695.14px;width:20.00px;height:20.00px;background:#4cae4f;border-radius:50%;box-shadow:1.5px 1.5px 2px rgba(0,0,0,0.28)"></div>
<div class="t" style="left:331.00px;top:699.87px;font-size:13.2px;line-height:13.2px;font-weight:400;color:#222;transform:scaleX(0.955);transform-origin:0 0;-webkit-text-stroke:0.2px #222;">T-000031</div>
<svg class="b" style="left:392.00px;top:699.94px;" width="28" height="11" viewBox="0 0 28 11"><path d="M0.9 1.6l1 .9 2-2.2" fill="none" stroke="#3f5f85" stroke-width="1"/><path d="M5.1 0.9h7.5M5.1 5h7.5M5.1 9.2h7.5" stroke="#7ea2c9" stroke-width="1.6"/><path d="M16.2 3.3l5.8 5.8 5.8-5.8" fill="none" stroke="#4577b3" stroke-width="1.25"/></svg>
<div class="t" style="left:560.30px;top:698.17px;font-size:16.1px;line-height:16.1px;font-weight:400;color:#141414;">IT - Implementar wifi em todas lojas</div>
<div class="t" style="left:886.40px;top:698.96px;font-size:16px;line-height:16px;font-weight:400;color:#141414;">Direção IT</div>
<div class="b" style="left:1056.00px;top:693.44px;width:77.00px;height:23.40px;border:1px solid #5a84b8;border-radius:3px;box-sizing:border-box"></div>
<div class="t" style="left:894.50px;width:400px;text-align:center;top:699.71px;font-size:11.5px;line-height:11.5px;font-weight:400;color:#4677b3;-webkit-text-stroke:0.25px #4677b3;">Prioritário</div>
<div class="t" style="left:1002.00px;width:400px;text-align:center;top:701.02px;font-size:12.9px;line-height:12.9px;font-weight:400;color:#222;-webkit-text-stroke:0.2px #222;">2026-02-16</div>
<div class="t" style="left:1131.00px;width:400px;text-align:center;top:701.02px;font-size:12.9px;line-height:12.9px;font-weight:400;color:#222;-webkit-text-stroke:0.2px #222;">2026-02-27</div>
<div class="t" style="left:1403.80px;top:699.67px;font-size:11.3px;line-height:11.3px;font-weight:400;color:#222;transform:scaleX(0.82);transform-origin:0 0;-webkit-text-stroke:0.2px #222;">0</div>
<div class="b" style="left:1417.00px;top:698.44px;width:91.00px;height:12.00px;background:#d6d6d6;border-radius:4px"></div>
<div class="b" style="left:1417px;top:698.44px;width:91.00px;height:12px;background:#3fa24d;border-radius:4px 0 0 4px;border-radius:4px;overflow:visible"><div style="position:absolute;left:0;top:0;width:91.00px;text-align:center;font-size:10.6px;line-height:14px;color:#fff;transform:scaleX(0.92)">100%</div></div>
<div class="t" style="left:1125.80px;width:400px;text-align:right;top:699.67px;font-size:11.3px;line-height:11.3px;font-weight:400;color:#222;transform:scaleX(0.82);transform-origin:400px 0;-webkit-text-stroke:0.2px #222;">12</div>
<svg class="b" style="left:1542.00px;top:697.94px;" width="21" height="13" viewBox="0 0 21 13"><path d="M0.9 6.5Q10.5 -3.6 20.1 6.5Q10.5 16.6 0.9 6.5Z" fill="none" stroke="#3d6fa6" stroke-width="1.5" stroke-linejoin="round"/><circle cx="10.5" cy="6.5" r="3.7" fill="none" stroke="#3d6fa6" stroke-width="1.7"/><circle cx="10.5" cy="6.3" r="1.7" fill="#3d6fa6"/></svg>
<svg class="b" style="left:1579.00px;top:695.94px;" width="14" height="18" viewBox="0 0 14 18"><path d="M0.75 0.75H9L13.25 5V17.25H0.75Z" fill="none" stroke="#3d6fa6" stroke-width="1.5" stroke-linejoin="miter"/><path d="M9.4 1.3L12.7 4.6H9.4Z" fill="#3d6fa6" fill-opacity="0.45"/><path d="M4.2 6.4L9.4 13.7M9.4 6.4L4.2 13.7" stroke="#3d6fa6" stroke-width="1.35"/></svg>
<svg class="b" style="left:1609.00px;top:695.94px;" width="19" height="18" viewBox="0 0 19 18"><path d="M11.6 3.3V0.75H1.25V13.6H7" fill="none" stroke="#3d6fa6" stroke-width="1.5"/><rect x="7.95" y="4.05" width="10.3" height="12.2" fill="none" stroke="#3d6fa6" stroke-width="1.5"/></svg>
<svg class="b" style="left:1642.00px;top:695.94px;" width="19" height="18" viewBox="0 0 19 18"><path d="M9.6 4.05H1.95V15.95H14.05V8.6" fill="none" stroke="#3d6fa6" stroke-width="1.5"/><path d="M6.9 11.2L7.6 8.2L15.4 0.95Q16.5 0.2 17.3 1.05Q18.1 1.9 17.2 2.9L9.6 10.3Z" fill="none" stroke="#3d6fa6" stroke-width="1.3" stroke-linejoin="round"/></svg>
<svg class="b" style="left:1680.00px;top:694.94px;" width="16" height="19" viewBox="0 0 16 19"><path d="M0.9 4.3H15.1" stroke="#cf4a5b" stroke-width="1.5"/><path d="M5.6 4.1Q5.6 1.6 8 1.6Q10.4 1.6 10.4 4.1" fill="none" stroke="#cf4a5b" stroke-width="1.5"/><path d="M2.4 4.5L3.2 16.3Q3.3 17.5 4.5 17.5H11.5Q12.7 17.5 12.8 16.3L13.6 4.5" fill="none" stroke="#cf4a5b" stroke-width="1.5"/><path d="M5.6 7.4v7.2M8 7.4v7.2M10.4 7.4v7.2" stroke="#cf4a5b" stroke-width="1.3"/></svg>
<div class="b" style="left:293.00px;top:735.52px;width:20.00px;height:20.00px;background:#4cae4f;border-radius:50%;box-shadow:1.5px 1.5px 2px rgba(0,0,0,0.28)"></div>
<div class="t" style="left:331.00px;top:740.25px;font-size:13.2px;line-height:13.2px;font-weight:400;color:#222;transform:scaleX(0.955);transform-origin:0 0;-webkit-text-stroke:0.2px #222;">T-000030</div>
<svg class="b" style="left:392.00px;top:740.32px;" width="28" height="11" viewBox="0 0 28 11"><path d="M0.9 1.6l1 .9 2-2.2" fill="none" stroke="#3f5f85" stroke-width="1"/><path d="M5.1 0.9h7.5M5.1 5h7.5M5.1 9.2h7.5" stroke="#7ea2c9" stroke-width="1.6"/><path d="M16.2 3.3l5.8 5.8 5.8-5.8" fill="none" stroke="#4577b3" stroke-width="1.25"/></svg>
<div class="t" style="left:560.30px;top:737.27px;font-size:16.1px;line-height:16.1px;font-weight:400;color:#141414;">LOJA - Campanha produto sazonal</div>
<div class="t" style="left:886.30px;top:729.16px;font-size:16px;line-height:16px;font-weight:400;color:#141414;">Responsavel</div>
<div class="t" style="left:886.30px;top:749.06px;font-size:16px;line-height:16px;font-weight:400;color:#141414;">Nacional</div>
<div class="b" style="left:1063.00px;top:733.82px;width:63.00px;height:23.40px;border:1px solid #55ab7a;border-radius:3px;box-sizing:border-box"></div>
<div class="t" style="left:894.50px;width:400px;text-align:center;top:740.17px;font-size:11.4px;line-height:11.4px;font-weight:400;color:#3a9862;-webkit-text-stroke:0.25px #3a9862;">Normal</div>
<div class="t" style="left:1002.00px;width:400px;text-align:center;top:741.40px;font-size:12.9px;line-height:12.9px;font-weight:400;color:#222;-webkit-text-stroke:0.2px #222;">2026-02-12</div>
<div class="t" style="left:1131.00px;width:400px;text-align:center;top:741.40px;font-size:12.9px;line-height:12.9px;font-weight:400;color:#222;-webkit-text-stroke:0.2px #222;">2026-02-20</div>
<div class="t" style="left:1403.80px;top:740.05px;font-size:11.3px;line-height:11.3px;font-weight:400;color:#222;transform:scaleX(0.82);transform-origin:0 0;-webkit-text-stroke:0.2px #222;">0</div>
<div class="b" style="left:1417.00px;top:738.82px;width:91.00px;height:12.00px;background:#d6d6d6;border-radius:4px"></div>
<div class="b" style="left:1417px;top:738.82px;width:91.00px;height:12px;background:#3fa24d;border-radius:4px 0 0 4px;border-radius:4px;overflow:visible"><div style="position:absolute;left:0;top:0;width:91.00px;text-align:center;font-size:10.6px;line-height:14px;color:#fff;transform:scaleX(0.92)">100%</div></div>
<div class="t" style="left:1125.80px;width:400px;text-align:right;top:740.05px;font-size:11.3px;line-height:11.3px;font-weight:400;color:#222;transform:scaleX(0.82);transform-origin:400px 0;-webkit-text-stroke:0.2px #222;">51</div>
<svg class="b" style="left:1542.00px;top:738.32px;" width="21" height="13" viewBox="0 0 21 13"><path d="M0.9 6.5Q10.5 -3.6 20.1 6.5Q10.5 16.6 0.9 6.5Z" fill="none" stroke="#3d6fa6" stroke-width="1.5" stroke-linejoin="round"/><circle cx="10.5" cy="6.5" r="3.7" fill="none" stroke="#3d6fa6" stroke-width="1.7"/><circle cx="10.5" cy="6.3" r="1.7" fill="#3d6fa6"/></svg>
<svg class="b" style="left:1579.00px;top:736.32px;" width="14" height="18" viewBox="0 0 14 18"><path d="M0.75 0.75H9L13.25 5V17.25H0.75Z" fill="none" stroke="#3d6fa6" stroke-width="1.5" stroke-linejoin="miter"/><path d="M9.4 1.3L12.7 4.6H9.4Z" fill="#3d6fa6" fill-opacity="0.45"/><path d="M4.2 6.4L9.4 13.7M9.4 6.4L4.2 13.7" stroke="#3d6fa6" stroke-width="1.35"/></svg>
<svg class="b" style="left:1609.00px;top:736.32px;" width="19" height="18" viewBox="0 0 19 18"><path d="M11.6 3.3V0.75H1.25V13.6H7" fill="none" stroke="#3d6fa6" stroke-width="1.5"/><rect x="7.95" y="4.05" width="10.3" height="12.2" fill="none" stroke="#3d6fa6" stroke-width="1.5"/></svg>
<svg class="b" style="left:1642.00px;top:736.32px;" width="19" height="18" viewBox="0 0 19 18"><path d="M9.6 4.05H1.95V15.95H14.05V8.6" fill="none" stroke="#3d6fa6" stroke-width="1.5"/><path d="M6.9 11.2L7.6 8.2L15.4 0.95Q16.5 0.2 17.3 1.05Q18.1 1.9 17.2 2.9L9.6 10.3Z" fill="none" stroke="#3d6fa6" stroke-width="1.3" stroke-linejoin="round"/></svg>
<svg class="b" style="left:1680.00px;top:735.32px;" width="16" height="19" viewBox="0 0 16 19"><path d="M0.9 4.3H15.1" stroke="#cf4a5b" stroke-width="1.5"/><path d="M5.6 4.1Q5.6 1.6 8 1.6Q10.4 1.6 10.4 4.1" fill="none" stroke="#cf4a5b" stroke-width="1.5"/><path d="M2.4 4.5L3.2 16.3Q3.3 17.5 4.5 17.5H11.5Q12.7 17.5 12.8 16.3L13.6 4.5" fill="none" stroke="#cf4a5b" stroke-width="1.5"/><path d="M5.6 7.4v7.2M8 7.4v7.2M10.4 7.4v7.2" stroke="#cf4a5b" stroke-width="1.3"/></svg>
<div class="b" style="left:293.00px;top:775.90px;width:20.00px;height:20.00px;background:#4cae4f;border-radius:50%;box-shadow:1.5px 1.5px 2px rgba(0,0,0,0.28)"></div>
<div class="t" style="left:331.00px;top:780.63px;font-size:13.2px;line-height:13.2px;font-weight:400;color:#222;transform:scaleX(0.955);transform-origin:0 0;-webkit-text-stroke:0.2px #222;">T-000029</div>
<svg class="b" style="left:392.00px;top:780.70px;" width="28" height="11" viewBox="0 0 28 11"><path d="M0.9 1.6l1 .9 2-2.2" fill="none" stroke="#3f5f85" stroke-width="1"/><path d="M5.1 0.9h7.5M5.1 5h7.5M5.1 9.2h7.5" stroke="#7ea2c9" stroke-width="1.6"/><path d="M16.2 3.3l5.8 5.8 5.8-5.8" fill="none" stroke="#4577b3" stroke-width="1.25"/></svg>
<div class="t" style="left:561.40px;top:779.17px;font-size:16.1px;line-height:16.1px;font-weight:400;color:#141414;">RH - Mapa necessidades recursos</div>
<div class="t" style="left:885.70px;top:780.16px;font-size:16px;line-height:16px;font-weight:400;color:#141414;">admin</div>
<div class="b" style="left:1056.00px;top:774.20px;width:77.00px;height:23.40px;border:1px solid #5a84b8;border-radius:3px;box-sizing:border-box"></div>
<div class="t" style="left:894.50px;width:400px;text-align:center;top:780.47px;font-size:11.5px;line-height:11.5px;font-weight:400;color:#4677b3;-webkit-text-stroke:0.25px #4677b3;">Prioritário</div>
<div class="t" style="left:1002.00px;width:400px;text-align:center;top:781.78px;font-size:12.9px;line-height:12.9px;font-weight:400;color:#222;-webkit-text-stroke:0.2px #222;">2026-02-12</div>
<div class="t" style="left:1131.00px;width:400px;text-align:center;top:781.78px;font-size:12.9px;line-height:12.9px;font-weight:400;color:#222;-webkit-text-stroke:0.2px #222;">2026-02-20</div>
<div class="t" style="left:1403.80px;top:780.43px;font-size:11.3px;line-height:11.3px;font-weight:400;color:#222;transform:scaleX(0.82);transform-origin:0 0;-webkit-text-stroke:0.2px #222;">0</div>
<div class="b" style="left:1417.00px;top:779.20px;width:91.00px;height:12.00px;background:#d6d6d6;border-radius:4px"></div>
<div class="b" style="left:1417px;top:779.20px;width:91.00px;height:12px;background:#3fa24d;border-radius:4px 0 0 4px;border-radius:4px;overflow:visible"><div style="position:absolute;left:0;top:0;width:91.00px;text-align:center;font-size:10.6px;line-height:14px;color:#fff;transform:scaleX(0.92)">100%</div></div>
<div class="t" style="left:1125.80px;width:400px;text-align:right;top:780.43px;font-size:11.3px;line-height:11.3px;font-weight:400;color:#222;transform:scaleX(0.82);transform-origin:400px 0;-webkit-text-stroke:0.2px #222;">20</div>
<svg class="b" style="left:1542.00px;top:778.70px;" width="21" height="13" viewBox="0 0 21 13"><path d="M0.9 6.5Q10.5 -3.6 20.1 6.5Q10.5 16.6 0.9 6.5Z" fill="none" stroke="#3d6fa6" stroke-width="1.5" stroke-linejoin="round"/><circle cx="10.5" cy="6.5" r="3.7" fill="none" stroke="#3d6fa6" stroke-width="1.7"/><circle cx="10.5" cy="6.3" r="1.7" fill="#3d6fa6"/></svg>
<svg class="b" style="left:1579.00px;top:776.70px;" width="14" height="18" viewBox="0 0 14 18"><path d="M0.75 0.75H9L13.25 5V17.25H0.75Z" fill="none" stroke="#3d6fa6" stroke-width="1.5" stroke-linejoin="miter"/><path d="M9.4 1.3L12.7 4.6H9.4Z" fill="#3d6fa6" fill-opacity="0.45"/><path d="M4.2 6.4L9.4 13.7M9.4 6.4L4.2 13.7" stroke="#3d6fa6" stroke-width="1.35"/></svg>
<svg class="b" style="left:1609.00px;top:776.70px;" width="19" height="18" viewBox="0 0 19 18"><path d="M11.6 3.3V0.75H1.25V13.6H7" fill="none" stroke="#3d6fa6" stroke-width="1.5"/><rect x="7.95" y="4.05" width="10.3" height="12.2" fill="none" stroke="#3d6fa6" stroke-width="1.5"/></svg>
<svg class="b" style="left:1642.00px;top:776.70px;" width="19" height="18" viewBox="0 0 19 18"><path d="M9.6 4.05H1.95V15.95H14.05V8.6" fill="none" stroke="#3d6fa6" stroke-width="1.5"/><path d="M6.9 11.2L7.6 8.2L15.4 0.95Q16.5 0.2 17.3 1.05Q18.1 1.9 17.2 2.9L9.6 10.3Z" fill="none" stroke="#3d6fa6" stroke-width="1.3" stroke-linejoin="round"/></svg>
<svg class="b" style="left:1680.00px;top:775.70px;" width="16" height="19" viewBox="0 0 16 19"><path d="M0.9 4.3H15.1" stroke="#cf4a5b" stroke-width="1.5"/><path d="M5.6 4.1Q5.6 1.6 8 1.6Q10.4 1.6 10.4 4.1" fill="none" stroke="#cf4a5b" stroke-width="1.5"/><path d="M2.4 4.5L3.2 16.3Q3.3 17.5 4.5 17.5H11.5Q12.7 17.5 12.8 16.3L13.6 4.5" fill="none" stroke="#cf4a5b" stroke-width="1.5"/><path d="M5.6 7.4v7.2M8 7.4v7.2M10.4 7.4v7.2" stroke="#cf4a5b" stroke-width="1.3"/></svg>
<div class="b" style="left:293.00px;top:816.28px;width:20.00px;height:20.00px;background:#c9202e;border-radius:50%;box-shadow:1.5px 1.5px 2px rgba(0,0,0,0.28)"></div>
<div class="t" style="left:331.00px;top:821.01px;font-size:13.2px;line-height:13.2px;font-weight:400;color:#222;transform:scaleX(0.955);transform-origin:0 0;-webkit-text-stroke:0.2px #222;">T-000028</div>
<svg class="b" style="left:392.00px;top:821.08px;" width="28" height="11" viewBox="0 0 28 11"><path d="M0.9 1.6l1 .9 2-2.2" fill="none" stroke="#3f5f85" stroke-width="1"/><path d="M5.1 0.9h7.5M5.1 5h7.5M5.1 9.2h7.5" stroke="#7ea2c9" stroke-width="1.6"/><path d="M16.2 3.3l5.8 5.8 5.8-5.8" fill="none" stroke="#4577b3" stroke-width="1.25"/></svg>
<div class="t" style="left:560.40px;top:818.37px;font-size:16.1px;line-height:16.1px;font-weight:400;color:#141414;">DF - Mapas vendas globais</div>
<div class="t" style="left:885.70px;top:818.16px;font-size:16px;line-height:16px;font-weight:400;color:#141414;">admin</div>
<div class="b" style="left:1063.00px;top:814.58px;width:63.00px;height:23.40px;border:1px solid #55ab7a;border-radius:3px;box-sizing:border-box"></div>
<div class="t" style="left:894.50px;width:400px;text-align:center;top:820.93px;font-size:11.4px;line-height:11.4px;font-weight:400;color:#3a9862;-webkit-text-stroke:0.25px #3a9862;">Normal</div>
<div class="t" style="left:1002.00px;width:400px;text-align:center;top:822.16px;font-size:12.9px;line-height:12.9px;font-weight:400;color:#222;-webkit-text-stroke:0.2px #222;">2026-02-03</div>
<div class="t" style="left:1131.00px;width:400px;text-align:center;top:822.16px;font-size:12.9px;line-height:12.9px;font-weight:400;color:#222;-webkit-text-stroke:0.2px #222;">2026-02-28</div>
<div class="t" style="left:1403.80px;top:820.81px;font-size:11.3px;line-height:11.3px;font-weight:400;color:#222;transform:scaleX(0.82);transform-origin:0 0;-webkit-text-stroke:0.2px #222;">0</div>
<div class="b" style="left:1417.00px;top:819.58px;width:94.70px;height:12.00px;background:#d6d6d6;border-radius:4px"></div>
<div class="b" style="left:1417px;top:819.58px;width:84.28px;height:12px;background:#3fa24d;border-radius:4px 0 0 4px;overflow:visible"><div style="position:absolute;left:0;top:0;width:84.28px;text-align:center;font-size:10.6px;line-height:14px;color:#fff;transform:scaleX(0.92)">89%</div></div>
<div class="t" style="left:1125.80px;width:400px;text-align:right;top:820.81px;font-size:11.3px;line-height:11.3px;font-weight:400;color:#222;transform:scaleX(0.82);transform-origin:400px 0;-webkit-text-stroke:0.2px #222;">9</div>
<svg class="b" style="left:1542.00px;top:819.08px;" width="21" height="13" viewBox="0 0 21 13"><path d="M0.9 6.5Q10.5 -3.6 20.1 6.5Q10.5 16.6 0.9 6.5Z" fill="none" stroke="#3d6fa6" stroke-width="1.5" stroke-linejoin="round"/><circle cx="10.5" cy="6.5" r="3.7" fill="none" stroke="#3d6fa6" stroke-width="1.7"/><circle cx="10.5" cy="6.3" r="1.7" fill="#3d6fa6"/></svg>
<svg class="b" style="left:1579.00px;top:817.08px;" width="14" height="18" viewBox="0 0 14 18"><path d="M0.75 0.75H9L13.25 5V17.25H0.75Z" fill="none" stroke="#3d6fa6" stroke-width="1.5" stroke-linejoin="miter"/><path d="M9.4 1.3L12.7 4.6H9.4Z" fill="#3d6fa6" fill-opacity="0.45"/><path d="M4.2 6.4L9.4 13.7M9.4 6.4L4.2 13.7" stroke="#3d6fa6" stroke-width="1.35"/></svg>
<svg class="b" style="left:1609.00px;top:817.08px;" width="19" height="18" viewBox="0 0 19 18"><path d="M11.6 3.3V0.75H1.25V13.6H7" fill="none" stroke="#3d6fa6" stroke-width="1.5"/><rect x="7.95" y="4.05" width="10.3" height="12.2" fill="none" stroke="#3d6fa6" stroke-width="1.5"/></svg>
<svg class="b" style="left:1642.00px;top:817.08px;" width="19" height="18" viewBox="0 0 19 18"><path d="M9.6 4.05H1.95V15.95H14.05V8.6" fill="none" stroke="#3d6fa6" stroke-width="1.5"/><path d="M6.9 11.2L7.6 8.2L15.4 0.95Q16.5 0.2 17.3 1.05Q18.1 1.9 17.2 2.9L9.6 10.3Z" fill="none" stroke="#3d6fa6" stroke-width="1.3" stroke-linejoin="round"/></svg>
<svg class="b" style="left:1680.00px;top:816.08px;" width="16" height="19" viewBox="0 0 16 19"><path d="M0.9 4.3H15.1" stroke="#cf4a5b" stroke-width="1.5"/><path d="M5.6 4.1Q5.6 1.6 8 1.6Q10.4 1.6 10.4 4.1" fill="none" stroke="#cf4a5b" stroke-width="1.5"/><path d="M2.4 4.5L3.2 16.3Q3.3 17.5 4.5 17.5H11.5Q12.7 17.5 12.8 16.3L13.6 4.5" fill="none" stroke="#cf4a5b" stroke-width="1.5"/><path d="M5.6 7.4v7.2M8 7.4v7.2M10.4 7.4v7.2" stroke="#cf4a5b" stroke-width="1.3"/></svg>
<div class="b" style="left:293.00px;top:856.66px;width:20.00px;height:20.00px;background:#4cae4f;border-radius:50%;box-shadow:1.5px 1.5px 2px rgba(0,0,0,0.28)"></div>
<div class="t" style="left:331.00px;top:861.39px;font-size:13.2px;line-height:13.2px;font-weight:400;color:#222;transform:scaleX(0.955);transform-origin:0 0;-webkit-text-stroke:0.2px #222;">T-000026</div>
<svg class="b" style="left:392.00px;top:861.46px;" width="28" height="11" viewBox="0 0 28 11"><path d="M0.9 1.6l1 .9 2-2.2" fill="none" stroke="#3f5f85" stroke-width="1"/><path d="M5.1 0.9h7.5M5.1 5h7.5M5.1 9.2h7.5" stroke="#7ea2c9" stroke-width="1.6"/><path d="M16.2 3.3l5.8 5.8 5.8-5.8" fill="none" stroke="#4577b3" stroke-width="1.25"/></svg>
<div class="t" style="left:557.00px;top:860.57px;font-size:13.5px;line-height:13.5px;font-weight:400;color:#141414;">Implementação da estante de Bonés</div>
<div class="t" style="left:878.60px;top:860.57px;font-size:13.5px;line-height:13.5px;font-weight:400;color:#141414;">Joana Teixeira</div>
<div class="b" style="left:1056.00px;top:854.96px;width:77.00px;height:23.40px;border:1px solid #5a84b8;border-radius:3px;box-sizing:border-box"></div>
<div class="t" style="left:894.50px;width:400px;text-align:center;top:861.23px;font-size:11.5px;line-height:11.5px;font-weight:400;color:#4677b3;-webkit-text-stroke:0.25px #4677b3;">Prioritário</div>
<div class="t" style="left:1002.00px;width:400px;text-align:center;top:862.54px;font-size:12.9px;line-height:12.9px;font-weight:400;color:#222;-webkit-text-stroke:0.2px #222;">2026-02-10</div>
<div class="t" style="left:1131.00px;width:400px;text-align:center;top:862.54px;font-size:12.9px;line-height:12.9px;font-weight:400;color:#222;-webkit-text-stroke:0.2px #222;">2026-02-20</div>
<div class="t" style="left:1403.80px;top:861.19px;font-size:11.3px;line-height:11.3px;font-weight:400;color:#222;transform:scaleX(0.82);transform-origin:0 0;-webkit-text-stroke:0.2px #222;">0</div>
<div class="b" style="left:1417.00px;top:859.96px;width:91.00px;height:12.00px;background:#d6d6d6;border-radius:4px"></div>
<div class="b" style="left:1417px;top:859.96px;width:91.00px;height:12px;background:#3fa24d;border-radius:4px 0 0 4px;border-radius:4px;overflow:visible"><div style="position:absolute;left:0;top:0;width:91.00px;text-align:center;font-size:10.6px;line-height:14px;color:#fff;transform:scaleX(0.92)">100%</div></div>
<div class="t" style="left:1125.80px;width:400px;text-align:right;top:861.19px;font-size:11.3px;line-height:11.3px;font-weight:400;color:#222;transform:scaleX(0.82);transform-origin:400px 0;-webkit-text-stroke:0.2px #222;">39</div>
<svg class="b" style="left:1542.00px;top:859.46px;" width="21" height="13" viewBox="0 0 21 13"><path d="M0.9 6.5Q10.5 -3.6 20.1 6.5Q10.5 16.6 0.9 6.5Z" fill="none" stroke="#3d6fa6" stroke-width="1.5" stroke-linejoin="round"/><circle cx="10.5" cy="6.5" r="3.7" fill="none" stroke="#3d6fa6" stroke-width="1.7"/><circle cx="10.5" cy="6.3" r="1.7" fill="#3d6fa6"/></svg>
<svg class="b" style="left:1579.00px;top:857.46px;" width="14" height="18" viewBox="0 0 14 18"><path d="M0.75 0.75H9L13.25 5V17.25H0.75Z" fill="none" stroke="#3d6fa6" stroke-width="1.5" stroke-linejoin="miter"/><path d="M9.4 1.3L12.7 4.6H9.4Z" fill="#3d6fa6" fill-opacity="0.45"/><path d="M4.2 6.4L9.4 13.7M9.4 6.4L4.2 13.7" stroke="#3d6fa6" stroke-width="1.35"/></svg>
<svg class="b" style="left:1609.00px;top:857.46px;" width="19" height="18" viewBox="0 0 19 18"><path d="M11.6 3.3V0.75H1.25V13.6H7" fill="none" stroke="#3d6fa6" stroke-width="1.5"/><rect x="7.95" y="4.05" width="10.3" height="12.2" fill="none" stroke="#3d6fa6" stroke-width="1.5"/></svg>
<svg class="b" style="left:1642.00px;top:857.46px;" width="19" height="18" viewBox="0 0 19 18"><path d="M9.6 4.05H1.95V15.95H14.05V8.6" fill="none" stroke="#3d6fa6" stroke-width="1.5"/><path d="M6.9 11.2L7.6 8.2L15.4 0.95Q16.5 0.2 17.3 1.05Q18.1 1.9 17.2 2.9L9.6 10.3Z" fill="none" stroke="#3d6fa6" stroke-width="1.3" stroke-linejoin="round"/></svg>
<svg class="b" style="left:1680.00px;top:856.46px;" width="16" height="19" viewBox="0 0 16 19"><path d="M0.9 4.3H15.1" stroke="#cf4a5b" stroke-width="1.5"/><path d="M5.6 4.1Q5.6 1.6 8 1.6Q10.4 1.6 10.4 4.1" fill="none" stroke="#cf4a5b" stroke-width="1.5"/><path d="M2.4 4.5L3.2 16.3Q3.3 17.5 4.5 17.5H11.5Q12.7 17.5 12.8 16.3L13.6 4.5" fill="none" stroke="#cf4a5b" stroke-width="1.5"/><path d="M5.6 7.4v7.2M8 7.4v7.2M10.4 7.4v7.2" stroke="#cf4a5b" stroke-width="1.3"/></svg>
</body></html>
